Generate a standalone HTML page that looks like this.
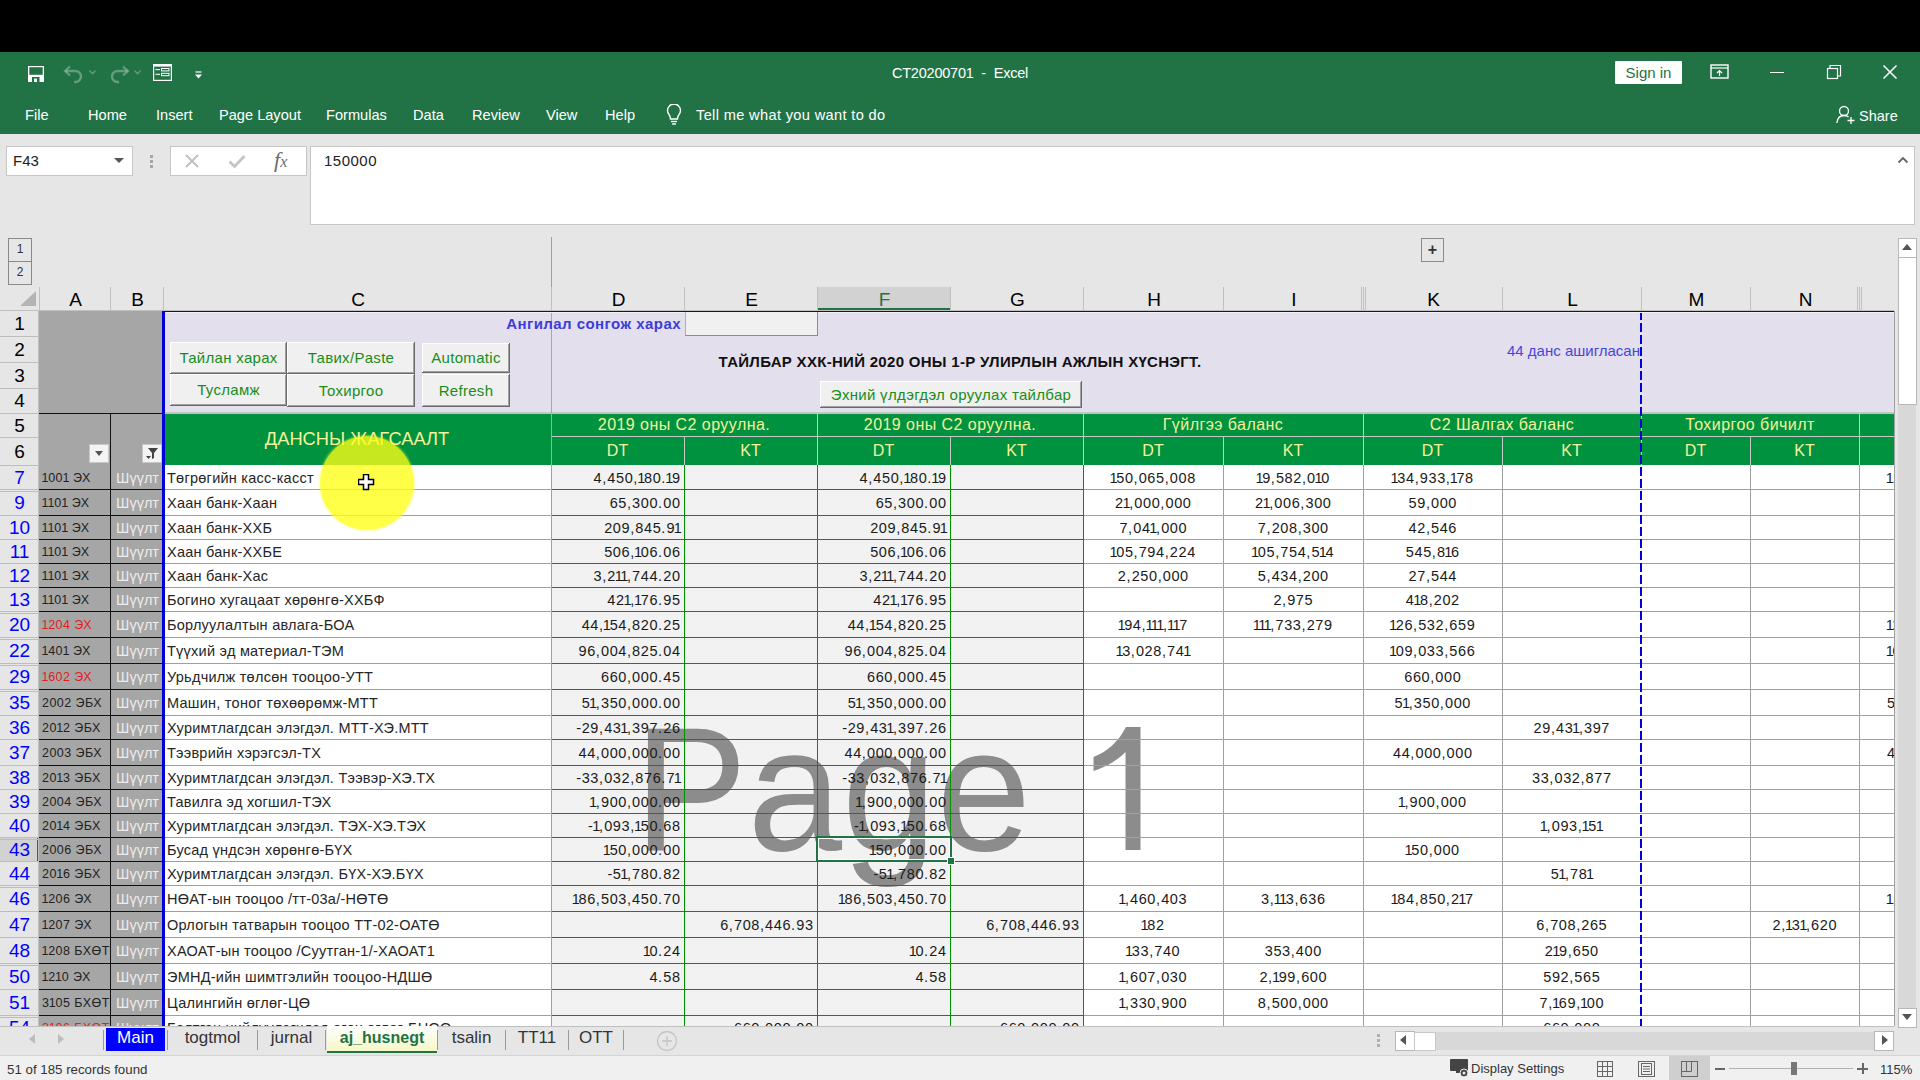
<!DOCTYPE html>
<html><head><meta charset="utf-8">
<style>
html,body{margin:0;padding:0;}
body{width:1920px;height:1080px;position:relative;overflow:hidden;background:#e6e6e6;font-family:"Liberation Sans",sans-serif;}
body>div,body>svg{position:absolute;}
div div{position:absolute;}
.t{white-space:nowrap;overflow:visible;}
</style></head><body>
<div style="left:0px;top:0px;width:1920px;height:52px;background:#000"></div>
<div style="left:0px;top:52px;width:1920px;height:82px;background:#217346"></div>
<svg style="left:28px;top:66px" width="16" height="16" viewBox="0 0 16 16">
<rect x="0" y="0" width="16" height="16" fill="#fff"/>
<rect x="1.3" y="1.2" width="13.4" height="7.6" fill="#217346"/>
<rect x="4" y="11" width="7.5" height="5" fill="#217346"/>
<rect x="6" y="12.6" width="3" height="3.4" fill="#fff"/>
</svg>
<svg style="left:63px;top:65px" width="22" height="19" viewBox="0 0 22 19">
<path d="M2.5 6 H12.5 A5.5 5.5 0 0 1 12.5 17 H11" fill="none" stroke="rgba(190,220,200,0.42)" stroke-width="2.4"/>
<path d="M7 1.5 L2 6 L7 10.5" fill="none" stroke="rgba(190,220,200,0.42)" stroke-width="2.2"/>
</svg>
<svg style="left:89px;top:70px" width="7" height="5" viewBox="0 0 7 5"><path d="M0.5 0.5 L3.5 3.8 L6.5 0.5" fill="none" stroke="rgba(190,220,200,0.42)" stroke-width="1.3"/></svg>
<svg style="left:108px;top:65px" width="22" height="19" viewBox="0 0 22 19">
<path d="M19.5 6 H9.5 A5.5 5.5 0 0 0 9.5 17 H11" fill="none" stroke="rgba(190,220,200,0.42)" stroke-width="2.4"/>
<path d="M15 1.5 L20 6 L15 10.5" fill="none" stroke="rgba(190,220,200,0.42)" stroke-width="2.2"/>
</svg>
<svg style="left:134px;top:70px" width="7" height="5" viewBox="0 0 7 5"><path d="M0.5 0.5 L3.5 3.8 L6.5 0.5" fill="none" stroke="rgba(190,220,200,0.42)" stroke-width="1.3"/></svg>
<svg style="left:153px;top:64px" width="19" height="17" viewBox="0 0 19 17">
<rect x="0.6" y="0.6" width="17.8" height="15.8" fill="none" stroke="#fff" stroke-width="1.2"/>
<rect x="0.6" y="0.6" width="17.8" height="2" fill="#fff"/>
<line x1="2.5" y1="5.6" x2="7" y2="5.6" stroke="#fff" stroke-width="1.1"/>
<rect x="8.5" y="4.5" width="7.5" height="2.4" fill="none" stroke="#fff" stroke-width="1"/>
<line x1="2.5" y1="10.3" x2="7" y2="10.3" stroke="#fff" stroke-width="1.1"/>
<rect x="8.5" y="9.3" width="7.5" height="2.4" fill="none" stroke="#fff" stroke-width="1"/>
</svg>
<svg style="left:195px;top:71px" width="7" height="8" viewBox="0 0 7 8">
<line x1="0.5" y1="1" x2="6.5" y2="1" stroke="#fff" stroke-width="1.2"/>
<path d="M0 3.5 H7 L3.5 7.5 Z" fill="#fff"/></svg>
<div class="t" style="left:700px;top:61px;width:520px;height:24px;line-height:24px;color:#fff;font-size:14.5px;text-align:center;letter-spacing:-0.2px">CT20200701&nbsp; -&nbsp; Excel</div>
<div style="left:1615px;top:61px;width:67px;height:23px;background:#fff;border-radius:1px"></div>
<div class="t" style="left:1615px;top:61px;width:67px;height:23px;line-height:23px;color:#217346;font-size:15px;text-align:center">Sign in</div>
<svg style="left:1710px;top:64px" width="20" height="16" viewBox="0 0 20 16">
<rect x="1" y="1" width="17" height="13" fill="none" stroke="#fff" stroke-width="1.4"/>
<line x1="1" y1="4" x2="18" y2="4" stroke="#fff" stroke-width="1.2"/>
<path d="M9.5 12 V6.5 M7 9 L9.5 6.5 L12 9" fill="none" stroke="#fff" stroke-width="1.2"/>
</svg>
<div style="left:1770px;top:72px;width:14px;height:1px;background:#fff"></div>
<svg style="left:1826px;top:64px" width="16" height="16" viewBox="0 0 16 16">
<rect x="1.5" y="4.5" width="10" height="10" fill="none" stroke="#fff" stroke-width="1.2"/>
<path d="M4 4.5 V1.5 H14.5 V12 H11.5" fill="none" stroke="#fff" stroke-width="1.2"/>
</svg>
<svg style="left:1882px;top:64px" width="16" height="16" viewBox="0 0 16 16">
<path d="M1.5 1.5 L14.5 14.5 M14.5 1.5 L1.5 14.5" stroke="#fff" stroke-width="1.5"/>
</svg>
<div class="t" style="left:25px;top:103px;width:200px;height:24px;line-height:24px;color:#fff;font-size:14.6px">File</div>
<div class="t" style="left:88px;top:103px;width:200px;height:24px;line-height:24px;color:#fff;font-size:14.6px">Home</div>
<div class="t" style="left:156px;top:103px;width:200px;height:24px;line-height:24px;color:#fff;font-size:14.6px">Insert</div>
<div class="t" style="left:219px;top:103px;width:200px;height:24px;line-height:24px;color:#fff;font-size:14.6px">Page Layout</div>
<div class="t" style="left:326px;top:103px;width:200px;height:24px;line-height:24px;color:#fff;font-size:14.6px">Formulas</div>
<div class="t" style="left:413px;top:103px;width:200px;height:24px;line-height:24px;color:#fff;font-size:14.6px">Data</div>
<div class="t" style="left:472px;top:103px;width:200px;height:24px;line-height:24px;color:#fff;font-size:14.6px">Review</div>
<div class="t" style="left:546px;top:103px;width:200px;height:24px;line-height:24px;color:#fff;font-size:14.6px">View</div>
<div class="t" style="left:605px;top:103px;width:200px;height:24px;line-height:24px;color:#fff;font-size:14.6px">Help</div>
<svg style="left:666px;top:104px" width="16" height="22" viewBox="0 0 16 22">
<path d="M4.5 15 C4.5 11 1.5 10 1.5 6.5 A6.5 6.5 0 0 1 14.5 6.5 C14.5 10 11.5 11 11.5 15 Z" fill="none" stroke="#fff" stroke-width="1.4"/>
<line x1="5" y1="17.5" x2="11" y2="17.5" stroke="#fff" stroke-width="1.4"/>
<line x1="6" y1="20" x2="10" y2="20" stroke="#fff" stroke-width="1.4"/>
</svg>
<div class="t" style="left:696px;top:103px;width:260px;height:24px;line-height:24px;color:#fff;font-size:14.6px;letter-spacing:0.35px">Tell me what you want to do</div>
<svg style="left:1836px;top:105px" width="20" height="20" viewBox="0 0 20 20">
<circle cx="8" cy="6" r="4.5" fill="none" stroke="#fff" stroke-width="1.3"/>
<path d="M0.8 18 C1.5 12 4 10.5 8 10.5 C10 10.5 11.5 11 12.5 12" fill="none" stroke="#fff" stroke-width="1.3"/>
<path d="M15 12 V19 M11.5 15.5 H18.5" stroke="#fff" stroke-width="1.3"/>
</svg>
<div class="t" style="left:1859px;top:104px;width:60px;height:24px;line-height:24px;color:#fff;font-size:14.5px">Share</div>
<div style="left:0px;top:134px;width:1920px;height:153px;background:#e6e6e6"></div>
<div style="left:6px;top:146px;width:125px;height:28px;background:#fff;border:1px solid #c6c6c6"></div>
<div class="t" style="left:13px;top:147px;width:60px;height:28px;line-height:28px;color:#222;font-size:15px">F43</div>
<svg style="left:114px;top:158px" width="10" height="6" viewBox="0 0 10 6"><path d="M0 0 H10 L5 5 Z" fill="#555"/></svg>
<div style="left:150px;top:155px;width:3px;height:3px;background:#a6a6a6"></div>
<div style="left:150px;top:160px;width:3px;height:3px;background:#a6a6a6"></div>
<div style="left:150px;top:165px;width:3px;height:3px;background:#a6a6a6"></div>
<div style="left:170px;top:146px;width:135px;height:28px;background:#fff;border:1px solid #c6c6c6"></div>
<svg style="left:184px;top:153px" width="16" height="16" viewBox="0 0 16 16">
<path d="M2 2 L14 14 M14 2 L2 14" stroke="#c0c0c0" stroke-width="2"/></svg>
<svg style="left:228px;top:153px" width="18" height="16" viewBox="0 0 18 16">
<path d="M1.5 8.5 L6.5 13.5 L16.5 3" fill="none" stroke="#c4c4c4" stroke-width="2.8"/></svg>
<div class="t" style="left:274px;top:146px;width:30px;height:28px;line-height:28px;color:#6a6a6a;font-size:22px;font-family:'Liberation Serif',serif"><i>f</i><span style="font-size:16px;font-style:italic">x</span></div>
<div style="left:310px;top:146px;width:1603px;height:77px;background:#fff;border:1px solid #c6c6c6"></div>
<div class="t" style="left:324px;top:147px;width:200px;height:28px;line-height:28px;color:#222;font-size:15px;letter-spacing:0.5px">150000</div>
<svg style="left:1897px;top:156px" width="12" height="8" viewBox="0 0 12 8"><path d="M1.5 6.5 L6 2 L10.5 6.5" fill="none" stroke="#666" stroke-width="1.8"/></svg>
<div style="left:8px;top:238px;width:22px;height:22px;background:#e6e6e6;border:1px solid #8a8a8a"></div>
<div class="t" style="left:8px;top:238px;width:24px;height:23px;line-height:23px;color:#333;font-size:12px;text-align:center">1</div>
<div style="left:8px;top:261px;width:22px;height:22px;background:#e6e6e6;border:1px solid #8a8a8a"></div>
<div class="t" style="left:8px;top:261px;width:24px;height:23px;line-height:23px;color:#333;font-size:12px;text-align:center">2</div>
<div style="left:1421px;top:238px;width:21px;height:22px;background:#e6e6e6;border:1px solid #8a8a8a"></div>
<div class="t" style="left:1421px;top:238px;width:23px;height:23px;line-height:23px;color:#333;font-size:16px;text-align:center;font-weight:bold">+</div>
<div style="left:551px;top:237px;width:1px;height:50px;background:#a0a0a0"></div>
<div style="left:0px;top:287px;width:1894px;height:24px;background:#e6e6e6"></div>
<div style="left:817px;top:287px;width:133px;height:24px;background:#d2d2d2"></div>
<div style="left:817px;top:308px;width:133px;height:2px;background:#217346"></div>
<div class="t" style="left:40px;top:287px;width:71px;height:25px;line-height:25px;color:#000;font-size:19px;text-align:center">A</div>
<div class="t" style="left:111px;top:287px;width:53px;height:25px;line-height:25px;color:#000;font-size:19px;text-align:center">B</div>
<div class="t" style="left:164px;top:287px;width:388px;height:25px;line-height:25px;color:#000;font-size:19px;text-align:center">C</div>
<div class="t" style="left:552px;top:287px;width:133px;height:25px;line-height:25px;color:#000;font-size:19px;text-align:center">D</div>
<div class="t" style="left:685px;top:287px;width:133px;height:25px;line-height:25px;color:#000;font-size:19px;text-align:center">E</div>
<div class="t" style="left:818px;top:287px;width:133px;height:25px;line-height:25px;color:#217346;font-size:19px;text-align:center">F</div>
<div class="t" style="left:951px;top:287px;width:133px;height:25px;line-height:25px;color:#000;font-size:19px;text-align:center">G</div>
<div class="t" style="left:1084px;top:287px;width:140px;height:25px;line-height:25px;color:#000;font-size:19px;text-align:center">H</div>
<div class="t" style="left:1224px;top:287px;width:140px;height:25px;line-height:25px;color:#000;font-size:19px;text-align:center">I</div>
<div class="t" style="left:1364px;top:287px;width:139px;height:25px;line-height:25px;color:#000;font-size:19px;text-align:center">K</div>
<div class="t" style="left:1503px;top:287px;width:139px;height:25px;line-height:25px;color:#000;font-size:19px;text-align:center">L</div>
<div class="t" style="left:1642px;top:287px;width:109px;height:25px;line-height:25px;color:#000;font-size:19px;text-align:center">M</div>
<div class="t" style="left:1751px;top:287px;width:109px;height:25px;line-height:25px;color:#000;font-size:19px;text-align:center">N</div>
<div style="left:39px;top:287px;width:1px;height:24px;background:#c0c0c0"></div>
<div style="left:110px;top:287px;width:1px;height:24px;background:#c0c0c0"></div>
<div style="left:163px;top:287px;width:1px;height:24px;background:#c0c0c0"></div>
<div style="left:551px;top:287px;width:1px;height:24px;background:#c0c0c0"></div>
<div style="left:684px;top:287px;width:1px;height:24px;background:#c0c0c0"></div>
<div style="left:817px;top:287px;width:1px;height:24px;background:#c0c0c0"></div>
<div style="left:950px;top:287px;width:1px;height:24px;background:#c0c0c0"></div>
<div style="left:1083px;top:287px;width:1px;height:24px;background:#c0c0c0"></div>
<div style="left:1223px;top:287px;width:1px;height:24px;background:#c0c0c0"></div>
<div style="left:1363px;top:287px;width:1px;height:24px;background:#c0c0c0"></div>
<div style="left:1502px;top:287px;width:1px;height:24px;background:#c0c0c0"></div>
<div style="left:1641px;top:287px;width:1px;height:24px;background:#c0c0c0"></div>
<div style="left:1750px;top:287px;width:1px;height:24px;background:#c0c0c0"></div>
<div style="left:1859px;top:287px;width:1px;height:24px;background:#c0c0c0"></div>
<div style="left:1361px;top:287px;width:1px;height:24px;background:#c0c0c0"></div>
<div style="left:1365px;top:287px;width:1px;height:24px;background:#c0c0c0"></div>
<div style="left:1857px;top:287px;width:1px;height:24px;background:#c0c0c0"></div>
<div style="left:1861px;top:287px;width:1px;height:24px;background:#c0c0c0"></div>
<div style="left:0px;top:310px;width:39px;height:1px;background:#c0c0c0"></div>
<svg style="left:20px;top:291px" width="17" height="16" viewBox="0 0 17 16"><path d="M16 0 V15 H0 Z" fill="#b4b4b4"/></svg>
<div style="left:0px;top:311px;width:39px;height:715px;background:#e6e6e6"></div>
<div class="t" style="left:0px;top:311px;width:39px;height:26px;line-height:26px;color:#000;font-size:19px;text-align:center">1</div>
<div class="t" style="left:0px;top:336px;width:39px;height:27px;line-height:27px;color:#000;font-size:19px;text-align:center">2</div>
<div class="t" style="left:0px;top:362px;width:39px;height:27px;line-height:27px;color:#000;font-size:19px;text-align:center">3</div>
<div class="t" style="left:0px;top:388px;width:39px;height:26px;line-height:26px;color:#000;font-size:19px;text-align:center">4</div>
<div class="t" style="left:0px;top:413px;width:39px;height:25px;line-height:25px;color:#000;font-size:19px;text-align:center">5</div>
<div class="t" style="left:0px;top:437px;width:39px;height:29px;line-height:29px;color:#000;font-size:19px;text-align:center">6</div>
<div class="t" style="left:0px;top:465px;width:39px;height:25px;line-height:25px;color:#0000ff;font-size:19px;text-align:center">7</div>
<div class="t" style="left:0px;top:490px;width:39px;height:26px;line-height:26px;color:#0000ff;font-size:19px;text-align:center">9</div>
<div class="t" style="left:0px;top:515px;width:39px;height:25px;line-height:25px;color:#0000ff;font-size:19px;text-align:center">10</div>
<div class="t" style="left:0px;top:539px;width:39px;height:25px;line-height:25px;color:#0000ff;font-size:19px;text-align:center">11</div>
<div class="t" style="left:0px;top:563px;width:39px;height:25px;line-height:25px;color:#0000ff;font-size:19px;text-align:center">12</div>
<div class="t" style="left:0px;top:587px;width:39px;height:25px;line-height:25px;color:#0000ff;font-size:19px;text-align:center">13</div>
<div class="t" style="left:0px;top:612px;width:39px;height:26px;line-height:26px;color:#0000ff;font-size:19px;text-align:center">20</div>
<div class="t" style="left:0px;top:638px;width:39px;height:26px;line-height:26px;color:#0000ff;font-size:19px;text-align:center">22</div>
<div class="t" style="left:0px;top:664px;width:39px;height:26px;line-height:26px;color:#0000ff;font-size:19px;text-align:center">29</div>
<div class="t" style="left:0px;top:690px;width:39px;height:26px;line-height:26px;color:#0000ff;font-size:19px;text-align:center">35</div>
<div class="t" style="left:0px;top:715px;width:39px;height:25px;line-height:25px;color:#0000ff;font-size:19px;text-align:center">36</div>
<div class="t" style="left:0px;top:739px;width:39px;height:27px;line-height:27px;color:#0000ff;font-size:19px;text-align:center">37</div>
<div class="t" style="left:0px;top:765px;width:39px;height:25px;line-height:25px;color:#0000ff;font-size:19px;text-align:center">38</div>
<div class="t" style="left:0px;top:789px;width:39px;height:25px;line-height:25px;color:#0000ff;font-size:19px;text-align:center">39</div>
<div class="t" style="left:0px;top:813px;width:39px;height:25px;line-height:25px;color:#0000ff;font-size:19px;text-align:center">40</div>
<div style="left:0px;top:838px;width:39px;height:23px;background:#d2d2d2"></div>
<div style="left:37px;top:838px;width:2px;height:23px;background:#217346"></div>
<div class="t" style="left:0px;top:838px;width:39px;height:24px;line-height:24px;color:#0000ff;font-size:19px;text-align:center">43</div>
<div class="t" style="left:0px;top:861px;width:39px;height:25px;line-height:25px;color:#0000ff;font-size:19px;text-align:center">44</div>
<div class="t" style="left:0px;top:886px;width:39px;height:26px;line-height:26px;color:#0000ff;font-size:19px;text-align:center">46</div>
<div class="t" style="left:0px;top:911px;width:39px;height:27px;line-height:27px;color:#0000ff;font-size:19px;text-align:center">47</div>
<div class="t" style="left:0px;top:937px;width:39px;height:27px;line-height:27px;color:#0000ff;font-size:19px;text-align:center">48</div>
<div class="t" style="left:0px;top:964px;width:39px;height:26px;line-height:26px;color:#0000ff;font-size:19px;text-align:center">50</div>
<div class="t" style="left:0px;top:989px;width:39px;height:27px;line-height:27px;color:#0000ff;font-size:19px;text-align:center">51</div>
<div class="t" style="left:0px;top:1015px;width:39px;height:26px;line-height:26px;color:#0000ff;font-size:19px;text-align:center">54</div>
<div style="left:0px;top:336px;width:39px;height:1px;background:#bdbdbd"></div>
<div style="left:0px;top:362px;width:39px;height:1px;background:#bdbdbd"></div>
<div style="left:0px;top:388px;width:39px;height:1px;background:#bdbdbd"></div>
<div style="left:0px;top:413px;width:39px;height:1px;background:#bdbdbd"></div>
<div style="left:0px;top:437px;width:39px;height:1px;background:#bdbdbd"></div>
<div style="left:0px;top:465px;width:39px;height:1px;background:#bdbdbd"></div>
<div style="left:0px;top:489px;width:39px;height:1px;background:#bdbdbd"></div>
<div style="left:0px;top:491px;width:39px;height:1px;background:#bdbdbd"></div>
<div style="left:0px;top:515px;width:39px;height:1px;background:#bdbdbd"></div>
<div style="left:0px;top:539px;width:39px;height:1px;background:#bdbdbd"></div>
<div style="left:0px;top:563px;width:39px;height:1px;background:#bdbdbd"></div>
<div style="left:0px;top:587px;width:39px;height:1px;background:#bdbdbd"></div>
<div style="left:0px;top:611px;width:39px;height:1px;background:#bdbdbd"></div>
<div style="left:0px;top:613px;width:39px;height:1px;background:#bdbdbd"></div>
<div style="left:0px;top:637px;width:39px;height:1px;background:#bdbdbd"></div>
<div style="left:0px;top:639px;width:39px;height:1px;background:#bdbdbd"></div>
<div style="left:0px;top:663px;width:39px;height:1px;background:#bdbdbd"></div>
<div style="left:0px;top:665px;width:39px;height:1px;background:#bdbdbd"></div>
<div style="left:0px;top:689px;width:39px;height:1px;background:#bdbdbd"></div>
<div style="left:0px;top:691px;width:39px;height:1px;background:#bdbdbd"></div>
<div style="left:0px;top:715px;width:39px;height:1px;background:#bdbdbd"></div>
<div style="left:0px;top:739px;width:39px;height:1px;background:#bdbdbd"></div>
<div style="left:0px;top:765px;width:39px;height:1px;background:#bdbdbd"></div>
<div style="left:0px;top:789px;width:39px;height:1px;background:#bdbdbd"></div>
<div style="left:0px;top:813px;width:39px;height:1px;background:#bdbdbd"></div>
<div style="left:0px;top:837px;width:39px;height:1px;background:#bdbdbd"></div>
<div style="left:0px;top:839px;width:39px;height:1px;background:#bdbdbd"></div>
<div style="left:0px;top:861px;width:39px;height:1px;background:#bdbdbd"></div>
<div style="left:0px;top:885px;width:39px;height:1px;background:#bdbdbd"></div>
<div style="left:0px;top:887px;width:39px;height:1px;background:#bdbdbd"></div>
<div style="left:0px;top:911px;width:39px;height:1px;background:#bdbdbd"></div>
<div style="left:0px;top:937px;width:39px;height:1px;background:#bdbdbd"></div>
<div style="left:0px;top:963px;width:39px;height:1px;background:#bdbdbd"></div>
<div style="left:0px;top:965px;width:39px;height:1px;background:#bdbdbd"></div>
<div style="left:0px;top:989px;width:39px;height:1px;background:#bdbdbd"></div>
<div style="left:0px;top:1015px;width:39px;height:1px;background:#bdbdbd"></div>
<div style="left:0px;top:1017px;width:39px;height:1px;background:#bdbdbd"></div>
<div style="left:38px;top:311px;width:1px;height:715px;background:#c0c0c0"></div>
<div style="left:39px;top:311px;width:124px;height:154px;background:#a6a6a6"></div>
<div style="left:39px;top:413px;width:124px;height:1px;background:#111"></div>
<div style="left:110px;top:413px;width:1px;height:52px;background:#111"></div>
<div style="left:163px;top:311px;width:1731px;height:102px;background:#e4dfec"></div>
<div style="left:163px;top:414px;width:1731px;height:51px;background:#00923f"></div>
<div style="left:551px;top:436px;width:1343px;height:1px;background:#c8c8c8"></div>
<div style="left:817px;top:413px;width:1px;height:52px;background:#c8c8c8"></div>
<div style="left:1083px;top:413px;width:1px;height:52px;background:#c8c8c8"></div>
<div style="left:1363px;top:413px;width:1px;height:52px;background:#c8c8c8"></div>
<div style="left:1641px;top:413px;width:1px;height:52px;background:#c8c8c8"></div>
<div style="left:1859px;top:413px;width:1px;height:52px;background:#c8c8c8"></div>
<div style="left:684px;top:437px;width:1px;height:28px;background:#c8c8c8"></div>
<div style="left:950px;top:437px;width:1px;height:28px;background:#c8c8c8"></div>
<div style="left:1223px;top:437px;width:1px;height:28px;background:#c8c8c8"></div>
<div style="left:1502px;top:437px;width:1px;height:28px;background:#c8c8c8"></div>
<div style="left:1750px;top:437px;width:1px;height:28px;background:#c8c8c8"></div>
<div style="left:163px;top:412px;width:1731px;height:2px;background:#c4c4c4"></div>
<div class="t" style="left:163px;top:413px;width:388px;height:52px;line-height:52px;color:#f4f49a;font-size:18.3px;text-align:center">ДАНСНЫ ЖАГСААЛТ</div>
<div class="t" style="left:551px;top:413px;width:266px;height:24px;line-height:24px;color:#f4f49a;font-size:16px;text-align:center;letter-spacing:0.45px">2019 оны С2 оруулна.</div>
<div class="t" style="left:817px;top:413px;width:266px;height:24px;line-height:24px;color:#f4f49a;font-size:16px;text-align:center;letter-spacing:0.45px">2019 оны С2 оруулна.</div>
<div class="t" style="left:1083px;top:413px;width:280px;height:24px;line-height:24px;color:#f4f49a;font-size:16px;text-align:center;letter-spacing:0.45px">Гүйлгээ баланс</div>
<div class="t" style="left:1363px;top:413px;width:278px;height:24px;line-height:24px;color:#f4f49a;font-size:16px;text-align:center;letter-spacing:0.45px">С2 Шалгах баланс</div>
<div class="t" style="left:1641px;top:413px;width:218px;height:24px;line-height:24px;color:#f4f49a;font-size:16px;text-align:center;letter-spacing:0.45px">Тохиргоо бичилт</div>
<div class="t" style="left:551px;top:437px;width:133px;height:28px;line-height:28px;color:#f4f49a;font-size:16px;text-align:center">DT</div>
<div class="t" style="left:684px;top:437px;width:133px;height:28px;line-height:28px;color:#f4f49a;font-size:16px;text-align:center">KT</div>
<div class="t" style="left:817px;top:437px;width:133px;height:28px;line-height:28px;color:#f4f49a;font-size:16px;text-align:center">DT</div>
<div class="t" style="left:950px;top:437px;width:133px;height:28px;line-height:28px;color:#f4f49a;font-size:16px;text-align:center">KT</div>
<div class="t" style="left:1083px;top:437px;width:140px;height:28px;line-height:28px;color:#f4f49a;font-size:16px;text-align:center">DT</div>
<div class="t" style="left:1223px;top:437px;width:140px;height:28px;line-height:28px;color:#f4f49a;font-size:16px;text-align:center">KT</div>
<div class="t" style="left:1363px;top:437px;width:139px;height:28px;line-height:28px;color:#f4f49a;font-size:16px;text-align:center">DT</div>
<div class="t" style="left:1502px;top:437px;width:139px;height:28px;line-height:28px;color:#f4f49a;font-size:16px;text-align:center">KT</div>
<div class="t" style="left:1641px;top:437px;width:109px;height:28px;line-height:28px;color:#f4f49a;font-size:16px;text-align:center">DT</div>
<div class="t" style="left:1750px;top:437px;width:109px;height:28px;line-height:28px;color:#f4f49a;font-size:16px;text-align:center">KT</div>
<div style="left:39px;top:465px;width:124px;height:561px;background:#a6a6a6"></div>
<div style="left:163px;top:465px;width:388px;height:561px;background:#fff"></div>
<div style="left:551px;top:465px;width:532px;height:561px;background:#f2f2f2"></div>
<div style="left:1083px;top:465px;width:811px;height:561px;background:#fff"></div>
<div class="t" style="left:634px;top:691px;width:700px;height:200px;line-height:200px;font-size:170px;color:#8c8c8c;white-space:nowrap;transform:scaleY(1.036);transform-origin:0 158.7px">Page</div>
<svg style="left:1093px;top:727px" width="48" height="124" viewBox="0 0 48 124"><path d="M33 0 H47.5 V123 H32.5 V25 C25 33 13 40 0.5 44 V30 C14 25 26 14 33 0 Z" fill="#8c8c8c"/></svg>
<div class="t" style="left:42px;top:466px;width:68px;height:24px;line-height:24px;font-size:12.5px;color:#222;white-space:nowrap;overflow:hidden;letter-spacing:0.45px"><span style="margin-left:-0.6px;letter-spacing:-0.2px">1</span>00<span style="margin-left:-0.6px;letter-spacing:-0.2px">1</span> ЭХ</div>
<div class="t" style="left:111px;top:466px;width:48px;height:24px;line-height:24px;font-size:14.5px;color:#ececec;text-align:right;overflow:hidden;white-space:nowrap">Шүүлт</div>
<div class="t" style="left:167px;top:466px;width:380px;height:24px;line-height:24px;font-size:14.5px;color:#1a1a1a;white-space:nowrap;letter-spacing:0.25px;color:#262626">Төгрөгийн касс-касст</div>
<div class="t" style="left:551px;top:466px;width:129.6px;height:24px;line-height:24px;font-size:14.5px;color:#1a1a1a;letter-spacing:0.6px;text-align:right">4<span style="letter-spacing:1.1px">,</span>450<span style="letter-spacing:1.1px">,</span><span style="margin-left:-1.3px;letter-spacing:-1.3px">1</span>80<span style="letter-spacing:1.1px">.</span><span style="margin-left:-1.3px;letter-spacing:-1.3px">1</span>9</div>
<div class="t" style="left:817px;top:466px;width:129.6px;height:24px;line-height:24px;font-size:14.5px;color:#1a1a1a;letter-spacing:0.6px;text-align:right">4<span style="letter-spacing:1.1px">,</span>450<span style="letter-spacing:1.1px">,</span><span style="margin-left:-1.3px;letter-spacing:-1.3px">1</span>80<span style="letter-spacing:1.1px">.</span><span style="margin-left:-1.3px;letter-spacing:-1.3px">1</span>9</div>
<div class="t" style="left:1083px;top:466px;width:140.6px;height:24px;line-height:24px;font-size:14.5px;color:#1a1a1a;letter-spacing:0.6px;text-align:center"><span style="margin-left:-1.3px;letter-spacing:-1.3px">1</span>50<span style="letter-spacing:1.1px">,</span>065<span style="letter-spacing:1.1px">,</span>008</div>
<div class="t" style="left:1223px;top:466px;width:140.6px;height:24px;line-height:24px;font-size:14.5px;color:#1a1a1a;letter-spacing:0.6px;text-align:center"><span style="margin-left:-1.3px;letter-spacing:-1.3px">1</span>9<span style="letter-spacing:1.1px">,</span>582<span style="letter-spacing:1.1px">,</span>0<span style="margin-left:-1.3px;letter-spacing:-1.3px">1</span>0</div>
<div class="t" style="left:1363px;top:466px;width:139.6px;height:24px;line-height:24px;font-size:14.5px;color:#1a1a1a;letter-spacing:0.6px;text-align:center"><span style="margin-left:-1.3px;letter-spacing:-1.3px">1</span>34<span style="letter-spacing:1.1px">,</span>933<span style="letter-spacing:1.1px">,</span><span style="margin-left:-1.3px;letter-spacing:-1.3px">1</span>78</div>
<div style="left:1860px;top:466px;width:34px;height:24px;overflow:hidden"><div class="t" style="left:27px;top:0;width:72px;height:24px;line-height:24px;font-size:14.5px;color:#1a1a1a;letter-spacing:0.6px;text-align:left"><span style="margin-left:-1.3px;letter-spacing:-1.3px">1</span>,000</div></div>
<div class="t" style="left:42px;top:491px;width:68px;height:25px;line-height:25px;font-size:12.5px;color:#222;white-space:nowrap;overflow:hidden;letter-spacing:0.45px"><span style="margin-left:-0.6px;letter-spacing:-0.2px">1</span><span style="margin-left:-0.6px;letter-spacing:-0.2px">1</span>0<span style="margin-left:-0.6px;letter-spacing:-0.2px">1</span> ЭХ</div>
<div class="t" style="left:111px;top:491px;width:48px;height:25px;line-height:25px;font-size:14.5px;color:#ececec;text-align:right;overflow:hidden;white-space:nowrap">Шүүлт</div>
<div class="t" style="left:167px;top:491px;width:380px;height:25px;line-height:25px;font-size:14.5px;color:#1a1a1a;white-space:nowrap;letter-spacing:0.25px;color:#262626">Хаан банк-Хаан</div>
<div class="t" style="left:551px;top:491px;width:129.6px;height:25px;line-height:25px;font-size:14.5px;color:#1a1a1a;letter-spacing:0.6px;text-align:right">65<span style="letter-spacing:1.1px">,</span>300<span style="letter-spacing:1.1px">.</span>00</div>
<div class="t" style="left:817px;top:491px;width:129.6px;height:25px;line-height:25px;font-size:14.5px;color:#1a1a1a;letter-spacing:0.6px;text-align:right">65<span style="letter-spacing:1.1px">,</span>300<span style="letter-spacing:1.1px">.</span>00</div>
<div class="t" style="left:1083px;top:491px;width:140.6px;height:25px;line-height:25px;font-size:14.5px;color:#1a1a1a;letter-spacing:0.6px;text-align:center">2<span style="margin-left:-1.3px;letter-spacing:-1.3px">1</span><span style="letter-spacing:1.1px">,</span>000<span style="letter-spacing:1.1px">,</span>000</div>
<div class="t" style="left:1223px;top:491px;width:140.6px;height:25px;line-height:25px;font-size:14.5px;color:#1a1a1a;letter-spacing:0.6px;text-align:center">2<span style="margin-left:-1.3px;letter-spacing:-1.3px">1</span><span style="letter-spacing:1.1px">,</span>006<span style="letter-spacing:1.1px">,</span>300</div>
<div class="t" style="left:1363px;top:491px;width:139.6px;height:25px;line-height:25px;font-size:14.5px;color:#1a1a1a;letter-spacing:0.6px;text-align:center">59<span style="letter-spacing:1.1px">,</span>000</div>
<div class="t" style="left:42px;top:516px;width:68px;height:24px;line-height:24px;font-size:12.5px;color:#222;white-space:nowrap;overflow:hidden;letter-spacing:0.45px"><span style="margin-left:-0.6px;letter-spacing:-0.2px">1</span><span style="margin-left:-0.6px;letter-spacing:-0.2px">1</span>0<span style="margin-left:-0.6px;letter-spacing:-0.2px">1</span> ЭХ</div>
<div class="t" style="left:111px;top:516px;width:48px;height:24px;line-height:24px;font-size:14.5px;color:#ececec;text-align:right;overflow:hidden;white-space:nowrap">Шүүлт</div>
<div class="t" style="left:167px;top:516px;width:380px;height:24px;line-height:24px;font-size:14.5px;color:#1a1a1a;white-space:nowrap;letter-spacing:0.25px;color:#262626">Хаан банк-ХХБ</div>
<div class="t" style="left:551px;top:516px;width:129.6px;height:24px;line-height:24px;font-size:14.5px;color:#1a1a1a;letter-spacing:0.6px;text-align:right">209<span style="letter-spacing:1.1px">,</span>845<span style="letter-spacing:1.1px">.</span>9<span style="margin-left:-1.3px;letter-spacing:-1.3px">1</span></div>
<div class="t" style="left:817px;top:516px;width:129.6px;height:24px;line-height:24px;font-size:14.5px;color:#1a1a1a;letter-spacing:0.6px;text-align:right">209<span style="letter-spacing:1.1px">,</span>845<span style="letter-spacing:1.1px">.</span>9<span style="margin-left:-1.3px;letter-spacing:-1.3px">1</span></div>
<div class="t" style="left:1083px;top:516px;width:140.6px;height:24px;line-height:24px;font-size:14.5px;color:#1a1a1a;letter-spacing:0.6px;text-align:center">7<span style="letter-spacing:1.1px">,</span>04<span style="margin-left:-1.3px;letter-spacing:-1.3px">1</span><span style="letter-spacing:1.1px">,</span>000</div>
<div class="t" style="left:1223px;top:516px;width:140.6px;height:24px;line-height:24px;font-size:14.5px;color:#1a1a1a;letter-spacing:0.6px;text-align:center">7<span style="letter-spacing:1.1px">,</span>208<span style="letter-spacing:1.1px">,</span>300</div>
<div class="t" style="left:1363px;top:516px;width:139.6px;height:24px;line-height:24px;font-size:14.5px;color:#1a1a1a;letter-spacing:0.6px;text-align:center">42<span style="letter-spacing:1.1px">,</span>546</div>
<div class="t" style="left:42px;top:540px;width:68px;height:24px;line-height:24px;font-size:12.5px;color:#222;white-space:nowrap;overflow:hidden;letter-spacing:0.45px"><span style="margin-left:-0.6px;letter-spacing:-0.2px">1</span><span style="margin-left:-0.6px;letter-spacing:-0.2px">1</span>0<span style="margin-left:-0.6px;letter-spacing:-0.2px">1</span> ЭХ</div>
<div class="t" style="left:111px;top:540px;width:48px;height:24px;line-height:24px;font-size:14.5px;color:#ececec;text-align:right;overflow:hidden;white-space:nowrap">Шүүлт</div>
<div class="t" style="left:167px;top:540px;width:380px;height:24px;line-height:24px;font-size:14.5px;color:#1a1a1a;white-space:nowrap;letter-spacing:0.25px;color:#262626">Хаан банк-ХХБЕ</div>
<div class="t" style="left:551px;top:540px;width:129.6px;height:24px;line-height:24px;font-size:14.5px;color:#1a1a1a;letter-spacing:0.6px;text-align:right">506<span style="letter-spacing:1.1px">,</span><span style="margin-left:-1.3px;letter-spacing:-1.3px">1</span>06<span style="letter-spacing:1.1px">.</span>06</div>
<div class="t" style="left:817px;top:540px;width:129.6px;height:24px;line-height:24px;font-size:14.5px;color:#1a1a1a;letter-spacing:0.6px;text-align:right">506<span style="letter-spacing:1.1px">,</span><span style="margin-left:-1.3px;letter-spacing:-1.3px">1</span>06<span style="letter-spacing:1.1px">.</span>06</div>
<div class="t" style="left:1083px;top:540px;width:140.6px;height:24px;line-height:24px;font-size:14.5px;color:#1a1a1a;letter-spacing:0.6px;text-align:center"><span style="margin-left:-1.3px;letter-spacing:-1.3px">1</span>05<span style="letter-spacing:1.1px">,</span>794<span style="letter-spacing:1.1px">,</span>224</div>
<div class="t" style="left:1223px;top:540px;width:140.6px;height:24px;line-height:24px;font-size:14.5px;color:#1a1a1a;letter-spacing:0.6px;text-align:center"><span style="margin-left:-1.3px;letter-spacing:-1.3px">1</span>05<span style="letter-spacing:1.1px">,</span>754<span style="letter-spacing:1.1px">,</span>5<span style="margin-left:-1.3px;letter-spacing:-1.3px">1</span>4</div>
<div class="t" style="left:1363px;top:540px;width:139.6px;height:24px;line-height:24px;font-size:14.5px;color:#1a1a1a;letter-spacing:0.6px;text-align:center">545<span style="letter-spacing:1.1px">,</span>8<span style="margin-left:-1.3px;letter-spacing:-1.3px">1</span>6</div>
<div class="t" style="left:42px;top:564px;width:68px;height:24px;line-height:24px;font-size:12.5px;color:#222;white-space:nowrap;overflow:hidden;letter-spacing:0.45px"><span style="margin-left:-0.6px;letter-spacing:-0.2px">1</span><span style="margin-left:-0.6px;letter-spacing:-0.2px">1</span>0<span style="margin-left:-0.6px;letter-spacing:-0.2px">1</span> ЭХ</div>
<div class="t" style="left:111px;top:564px;width:48px;height:24px;line-height:24px;font-size:14.5px;color:#ececec;text-align:right;overflow:hidden;white-space:nowrap">Шүүлт</div>
<div class="t" style="left:167px;top:564px;width:380px;height:24px;line-height:24px;font-size:14.5px;color:#1a1a1a;white-space:nowrap;letter-spacing:0.25px;color:#262626">Хаан банк-Хас</div>
<div class="t" style="left:551px;top:564px;width:129.6px;height:24px;line-height:24px;font-size:14.5px;color:#1a1a1a;letter-spacing:0.6px;text-align:right">3<span style="letter-spacing:1.1px">,</span>2<span style="margin-left:-1.3px;letter-spacing:-1.3px">1</span><span style="margin-left:-1.3px;letter-spacing:-1.3px">1</span><span style="letter-spacing:1.1px">,</span>744<span style="letter-spacing:1.1px">.</span>20</div>
<div class="t" style="left:817px;top:564px;width:129.6px;height:24px;line-height:24px;font-size:14.5px;color:#1a1a1a;letter-spacing:0.6px;text-align:right">3<span style="letter-spacing:1.1px">,</span>2<span style="margin-left:-1.3px;letter-spacing:-1.3px">1</span><span style="margin-left:-1.3px;letter-spacing:-1.3px">1</span><span style="letter-spacing:1.1px">,</span>744<span style="letter-spacing:1.1px">.</span>20</div>
<div class="t" style="left:1083px;top:564px;width:140.6px;height:24px;line-height:24px;font-size:14.5px;color:#1a1a1a;letter-spacing:0.6px;text-align:center">2<span style="letter-spacing:1.1px">,</span>250<span style="letter-spacing:1.1px">,</span>000</div>
<div class="t" style="left:1223px;top:564px;width:140.6px;height:24px;line-height:24px;font-size:14.5px;color:#1a1a1a;letter-spacing:0.6px;text-align:center">5<span style="letter-spacing:1.1px">,</span>434<span style="letter-spacing:1.1px">,</span>200</div>
<div class="t" style="left:1363px;top:564px;width:139.6px;height:24px;line-height:24px;font-size:14.5px;color:#1a1a1a;letter-spacing:0.6px;text-align:center">27<span style="letter-spacing:1.1px">,</span>544</div>
<div class="t" style="left:42px;top:588px;width:68px;height:24px;line-height:24px;font-size:12.5px;color:#222;white-space:nowrap;overflow:hidden;letter-spacing:0.45px"><span style="margin-left:-0.6px;letter-spacing:-0.2px">1</span><span style="margin-left:-0.6px;letter-spacing:-0.2px">1</span>0<span style="margin-left:-0.6px;letter-spacing:-0.2px">1</span> ЭХ</div>
<div class="t" style="left:111px;top:588px;width:48px;height:24px;line-height:24px;font-size:14.5px;color:#ececec;text-align:right;overflow:hidden;white-space:nowrap">Шүүлт</div>
<div class="t" style="left:167px;top:588px;width:380px;height:24px;line-height:24px;font-size:14.5px;color:#1a1a1a;white-space:nowrap;letter-spacing:0.25px;color:#262626">Богино хугацаат хөрөнгө-ХХБФ</div>
<div class="t" style="left:551px;top:588px;width:129.6px;height:24px;line-height:24px;font-size:14.5px;color:#1a1a1a;letter-spacing:0.6px;text-align:right">42<span style="margin-left:-1.3px;letter-spacing:-1.3px">1</span><span style="letter-spacing:1.1px">,</span><span style="margin-left:-1.3px;letter-spacing:-1.3px">1</span>76<span style="letter-spacing:1.1px">.</span>95</div>
<div class="t" style="left:817px;top:588px;width:129.6px;height:24px;line-height:24px;font-size:14.5px;color:#1a1a1a;letter-spacing:0.6px;text-align:right">42<span style="margin-left:-1.3px;letter-spacing:-1.3px">1</span><span style="letter-spacing:1.1px">,</span><span style="margin-left:-1.3px;letter-spacing:-1.3px">1</span>76<span style="letter-spacing:1.1px">.</span>95</div>
<div class="t" style="left:1223px;top:588px;width:140.6px;height:24px;line-height:24px;font-size:14.5px;color:#1a1a1a;letter-spacing:0.6px;text-align:center">2<span style="letter-spacing:1.1px">,</span>975</div>
<div class="t" style="left:1363px;top:588px;width:139.6px;height:24px;line-height:24px;font-size:14.5px;color:#1a1a1a;letter-spacing:0.6px;text-align:center">4<span style="margin-left:-1.3px;letter-spacing:-1.3px">1</span>8<span style="letter-spacing:1.1px">,</span>202</div>
<div class="t" style="left:42px;top:613px;width:68px;height:25px;line-height:25px;font-size:12.5px;color:#e02020;white-space:nowrap;overflow:hidden;letter-spacing:0.45px"><span style="margin-left:-0.6px;letter-spacing:-0.2px">1</span>204 ЭХ</div>
<div class="t" style="left:111px;top:613px;width:48px;height:25px;line-height:25px;font-size:14.5px;color:#ececec;text-align:right;overflow:hidden;white-space:nowrap">Шүүлт</div>
<div class="t" style="left:167px;top:613px;width:380px;height:25px;line-height:25px;font-size:14.5px;color:#1a1a1a;white-space:nowrap;letter-spacing:0.25px;color:#262626">Борлуулалтын авлага-БОА</div>
<div class="t" style="left:551px;top:613px;width:129.6px;height:25px;line-height:25px;font-size:14.5px;color:#1a1a1a;letter-spacing:0.6px;text-align:right">44<span style="letter-spacing:1.1px">,</span><span style="margin-left:-1.3px;letter-spacing:-1.3px">1</span>54<span style="letter-spacing:1.1px">,</span>820<span style="letter-spacing:1.1px">.</span>25</div>
<div class="t" style="left:817px;top:613px;width:129.6px;height:25px;line-height:25px;font-size:14.5px;color:#1a1a1a;letter-spacing:0.6px;text-align:right">44<span style="letter-spacing:1.1px">,</span><span style="margin-left:-1.3px;letter-spacing:-1.3px">1</span>54<span style="letter-spacing:1.1px">,</span>820<span style="letter-spacing:1.1px">.</span>25</div>
<div class="t" style="left:1083px;top:613px;width:140.6px;height:25px;line-height:25px;font-size:14.5px;color:#1a1a1a;letter-spacing:0.6px;text-align:center"><span style="margin-left:-1.3px;letter-spacing:-1.3px">1</span>94<span style="letter-spacing:1.1px">,</span><span style="margin-left:-1.3px;letter-spacing:-1.3px">1</span><span style="margin-left:-1.3px;letter-spacing:-1.3px">1</span><span style="margin-left:-1.3px;letter-spacing:-1.3px">1</span><span style="letter-spacing:1.1px">,</span><span style="margin-left:-1.3px;letter-spacing:-1.3px">1</span><span style="margin-left:-1.3px;letter-spacing:-1.3px">1</span>7</div>
<div class="t" style="left:1223px;top:613px;width:140.6px;height:25px;line-height:25px;font-size:14.5px;color:#1a1a1a;letter-spacing:0.6px;text-align:center"><span style="margin-left:-1.3px;letter-spacing:-1.3px">1</span><span style="margin-left:-1.3px;letter-spacing:-1.3px">1</span><span style="margin-left:-1.3px;letter-spacing:-1.3px">1</span><span style="letter-spacing:1.1px">,</span>733<span style="letter-spacing:1.1px">,</span>279</div>
<div class="t" style="left:1363px;top:613px;width:139.6px;height:25px;line-height:25px;font-size:14.5px;color:#1a1a1a;letter-spacing:0.6px;text-align:center"><span style="margin-left:-1.3px;letter-spacing:-1.3px">1</span>26<span style="letter-spacing:1.1px">,</span>532<span style="letter-spacing:1.1px">,</span>659</div>
<div style="left:1860px;top:613px;width:34px;height:25px;overflow:hidden"><div class="t" style="left:27px;top:0;width:72px;height:25px;line-height:25px;font-size:14.5px;color:#1a1a1a;letter-spacing:0.6px;text-align:left"><span style="margin-left:-1.3px;letter-spacing:-1.3px">1</span>2,000</div></div>
<div class="t" style="left:42px;top:639px;width:68px;height:25px;line-height:25px;font-size:12.5px;color:#222;white-space:nowrap;overflow:hidden;letter-spacing:0.45px"><span style="margin-left:-0.6px;letter-spacing:-0.2px">1</span>40<span style="margin-left:-0.6px;letter-spacing:-0.2px">1</span> ЭХ</div>
<div class="t" style="left:111px;top:639px;width:48px;height:25px;line-height:25px;font-size:14.5px;color:#ececec;text-align:right;overflow:hidden;white-space:nowrap">Шүүлт</div>
<div class="t" style="left:167px;top:639px;width:380px;height:25px;line-height:25px;font-size:14.5px;color:#1a1a1a;white-space:nowrap;letter-spacing:0.25px;color:#262626">Түүхий эд материал-ТЭМ</div>
<div class="t" style="left:551px;top:639px;width:129.6px;height:25px;line-height:25px;font-size:14.5px;color:#1a1a1a;letter-spacing:0.6px;text-align:right">96<span style="letter-spacing:1.1px">,</span>004<span style="letter-spacing:1.1px">,</span>825<span style="letter-spacing:1.1px">.</span>04</div>
<div class="t" style="left:817px;top:639px;width:129.6px;height:25px;line-height:25px;font-size:14.5px;color:#1a1a1a;letter-spacing:0.6px;text-align:right">96<span style="letter-spacing:1.1px">,</span>004<span style="letter-spacing:1.1px">,</span>825<span style="letter-spacing:1.1px">.</span>04</div>
<div class="t" style="left:1083px;top:639px;width:140.6px;height:25px;line-height:25px;font-size:14.5px;color:#1a1a1a;letter-spacing:0.6px;text-align:center"><span style="margin-left:-1.3px;letter-spacing:-1.3px">1</span>3<span style="letter-spacing:1.1px">,</span>028<span style="letter-spacing:1.1px">,</span>74<span style="margin-left:-1.3px;letter-spacing:-1.3px">1</span></div>
<div class="t" style="left:1363px;top:639px;width:139.6px;height:25px;line-height:25px;font-size:14.5px;color:#1a1a1a;letter-spacing:0.6px;text-align:center"><span style="margin-left:-1.3px;letter-spacing:-1.3px">1</span>09<span style="letter-spacing:1.1px">,</span>033<span style="letter-spacing:1.1px">,</span>566</div>
<div style="left:1860px;top:639px;width:34px;height:25px;overflow:hidden"><div class="t" style="left:27px;top:0;width:72px;height:25px;line-height:25px;font-size:14.5px;color:#1a1a1a;letter-spacing:0.6px;text-align:left"><span style="margin-left:-1.3px;letter-spacing:-1.3px">1</span>0,000</div></div>
<div class="t" style="left:42px;top:665px;width:68px;height:25px;line-height:25px;font-size:12.5px;color:#e02020;white-space:nowrap;overflow:hidden;letter-spacing:0.45px"><span style="margin-left:-0.6px;letter-spacing:-0.2px">1</span>602 ЭХ</div>
<div class="t" style="left:111px;top:665px;width:48px;height:25px;line-height:25px;font-size:14.5px;color:#ececec;text-align:right;overflow:hidden;white-space:nowrap">Шүүлт</div>
<div class="t" style="left:167px;top:665px;width:380px;height:25px;line-height:25px;font-size:14.5px;color:#1a1a1a;white-space:nowrap;letter-spacing:0.25px;color:#262626">Урьдчилж төлсөн тооцоо-УТТ</div>
<div class="t" style="left:551px;top:665px;width:129.6px;height:25px;line-height:25px;font-size:14.5px;color:#1a1a1a;letter-spacing:0.6px;text-align:right">660<span style="letter-spacing:1.1px">,</span>000<span style="letter-spacing:1.1px">.</span>45</div>
<div class="t" style="left:817px;top:665px;width:129.6px;height:25px;line-height:25px;font-size:14.5px;color:#1a1a1a;letter-spacing:0.6px;text-align:right">660<span style="letter-spacing:1.1px">,</span>000<span style="letter-spacing:1.1px">.</span>45</div>
<div class="t" style="left:1363px;top:665px;width:139.6px;height:25px;line-height:25px;font-size:14.5px;color:#1a1a1a;letter-spacing:0.6px;text-align:center">660<span style="letter-spacing:1.1px">,</span>000</div>
<div class="t" style="left:42px;top:691px;width:68px;height:25px;line-height:25px;font-size:12.5px;color:#222;white-space:nowrap;overflow:hidden;letter-spacing:0.45px">2002 ЭБХ</div>
<div class="t" style="left:111px;top:691px;width:48px;height:25px;line-height:25px;font-size:14.5px;color:#ececec;text-align:right;overflow:hidden;white-space:nowrap">Шүүлт</div>
<div class="t" style="left:167px;top:691px;width:380px;height:25px;line-height:25px;font-size:14.5px;color:#1a1a1a;white-space:nowrap;letter-spacing:0.25px;color:#262626">Машин, тоног төхөөрөмж-МТТ</div>
<div class="t" style="left:551px;top:691px;width:129.6px;height:25px;line-height:25px;font-size:14.5px;color:#1a1a1a;letter-spacing:0.6px;text-align:right">5<span style="margin-left:-1.3px;letter-spacing:-1.3px">1</span><span style="letter-spacing:1.1px">,</span>350<span style="letter-spacing:1.1px">,</span>000<span style="letter-spacing:1.1px">.</span>00</div>
<div class="t" style="left:817px;top:691px;width:129.6px;height:25px;line-height:25px;font-size:14.5px;color:#1a1a1a;letter-spacing:0.6px;text-align:right">5<span style="margin-left:-1.3px;letter-spacing:-1.3px">1</span><span style="letter-spacing:1.1px">,</span>350<span style="letter-spacing:1.1px">,</span>000<span style="letter-spacing:1.1px">.</span>00</div>
<div class="t" style="left:1363px;top:691px;width:139.6px;height:25px;line-height:25px;font-size:14.5px;color:#1a1a1a;letter-spacing:0.6px;text-align:center">5<span style="margin-left:-1.3px;letter-spacing:-1.3px">1</span><span style="letter-spacing:1.1px">,</span>350<span style="letter-spacing:1.1px">,</span>000</div>
<div style="left:1860px;top:691px;width:34px;height:25px;overflow:hidden"><div class="t" style="left:27px;top:0;width:72px;height:25px;line-height:25px;font-size:14.5px;color:#1a1a1a;letter-spacing:0.6px;text-align:left">5,000</div></div>
<div class="t" style="left:42px;top:716px;width:68px;height:24px;line-height:24px;font-size:12.5px;color:#222;white-space:nowrap;overflow:hidden;letter-spacing:0.45px">20<span style="margin-left:-0.6px;letter-spacing:-0.2px">1</span>2 ЭБХ</div>
<div class="t" style="left:111px;top:716px;width:48px;height:24px;line-height:24px;font-size:14.5px;color:#ececec;text-align:right;overflow:hidden;white-space:nowrap">Шүүлт</div>
<div class="t" style="left:167px;top:716px;width:380px;height:24px;line-height:24px;font-size:14.5px;color:#1a1a1a;white-space:nowrap;letter-spacing:0.25px;color:#262626">Хуримтлагдсан элэгдэл. МТТ-ХЭ.МТТ</div>
<div class="t" style="left:551px;top:716px;width:129.6px;height:24px;line-height:24px;font-size:14.5px;color:#1a1a1a;letter-spacing:0.6px;text-align:right">-29<span style="letter-spacing:1.1px">,</span>43<span style="margin-left:-1.3px;letter-spacing:-1.3px">1</span><span style="letter-spacing:1.1px">,</span>397<span style="letter-spacing:1.1px">.</span>26</div>
<div class="t" style="left:817px;top:716px;width:129.6px;height:24px;line-height:24px;font-size:14.5px;color:#1a1a1a;letter-spacing:0.6px;text-align:right">-29<span style="letter-spacing:1.1px">,</span>43<span style="margin-left:-1.3px;letter-spacing:-1.3px">1</span><span style="letter-spacing:1.1px">,</span>397<span style="letter-spacing:1.1px">.</span>26</div>
<div class="t" style="left:1502px;top:716px;width:139.6px;height:24px;line-height:24px;font-size:14.5px;color:#1a1a1a;letter-spacing:0.6px;text-align:center">29<span style="letter-spacing:1.1px">,</span>43<span style="margin-left:-1.3px;letter-spacing:-1.3px">1</span><span style="letter-spacing:1.1px">,</span>397</div>
<div class="t" style="left:42px;top:740px;width:68px;height:26px;line-height:26px;font-size:12.5px;color:#222;white-space:nowrap;overflow:hidden;letter-spacing:0.45px">2003 ЭБХ</div>
<div class="t" style="left:111px;top:740px;width:48px;height:26px;line-height:26px;font-size:14.5px;color:#ececec;text-align:right;overflow:hidden;white-space:nowrap">Шүүлт</div>
<div class="t" style="left:167px;top:740px;width:380px;height:26px;line-height:26px;font-size:14.5px;color:#1a1a1a;white-space:nowrap;letter-spacing:0.25px;color:#262626">Тээврийн хэрэгсэл-ТХ</div>
<div class="t" style="left:551px;top:740px;width:129.6px;height:26px;line-height:26px;font-size:14.5px;color:#1a1a1a;letter-spacing:0.6px;text-align:right">44<span style="letter-spacing:1.1px">,</span>000<span style="letter-spacing:1.1px">,</span>000<span style="letter-spacing:1.1px">.</span>00</div>
<div class="t" style="left:817px;top:740px;width:129.6px;height:26px;line-height:26px;font-size:14.5px;color:#1a1a1a;letter-spacing:0.6px;text-align:right">44<span style="letter-spacing:1.1px">,</span>000<span style="letter-spacing:1.1px">,</span>000<span style="letter-spacing:1.1px">.</span>00</div>
<div class="t" style="left:1363px;top:740px;width:139.6px;height:26px;line-height:26px;font-size:14.5px;color:#1a1a1a;letter-spacing:0.6px;text-align:center">44<span style="letter-spacing:1.1px">,</span>000<span style="letter-spacing:1.1px">,</span>000</div>
<div style="left:1860px;top:740px;width:34px;height:26px;overflow:hidden"><div class="t" style="left:27px;top:0;width:72px;height:26px;line-height:26px;font-size:14.5px;color:#1a1a1a;letter-spacing:0.6px;text-align:left">4,000</div></div>
<div class="t" style="left:42px;top:766px;width:68px;height:24px;line-height:24px;font-size:12.5px;color:#222;white-space:nowrap;overflow:hidden;letter-spacing:0.45px">20<span style="margin-left:-0.6px;letter-spacing:-0.2px">1</span>3 ЭБХ</div>
<div class="t" style="left:111px;top:766px;width:48px;height:24px;line-height:24px;font-size:14.5px;color:#ececec;text-align:right;overflow:hidden;white-space:nowrap">Шүүлт</div>
<div class="t" style="left:167px;top:766px;width:380px;height:24px;line-height:24px;font-size:14.5px;color:#1a1a1a;white-space:nowrap;letter-spacing:0.25px;color:#262626">Хуримтлагдсан элэгдэл. Тээвэр-ХЭ.ТХ</div>
<div class="t" style="left:551px;top:766px;width:129.6px;height:24px;line-height:24px;font-size:14.5px;color:#1a1a1a;letter-spacing:0.6px;text-align:right">-33<span style="letter-spacing:1.1px">,</span>032<span style="letter-spacing:1.1px">,</span>876<span style="letter-spacing:1.1px">.</span>7<span style="margin-left:-1.3px;letter-spacing:-1.3px">1</span></div>
<div class="t" style="left:817px;top:766px;width:129.6px;height:24px;line-height:24px;font-size:14.5px;color:#1a1a1a;letter-spacing:0.6px;text-align:right">-33<span style="letter-spacing:1.1px">,</span>032<span style="letter-spacing:1.1px">,</span>876<span style="letter-spacing:1.1px">.</span>7<span style="margin-left:-1.3px;letter-spacing:-1.3px">1</span></div>
<div class="t" style="left:1502px;top:766px;width:139.6px;height:24px;line-height:24px;font-size:14.5px;color:#1a1a1a;letter-spacing:0.6px;text-align:center">33<span style="letter-spacing:1.1px">,</span>032<span style="letter-spacing:1.1px">,</span>877</div>
<div class="t" style="left:42px;top:790px;width:68px;height:24px;line-height:24px;font-size:12.5px;color:#222;white-space:nowrap;overflow:hidden;letter-spacing:0.45px">2004 ЭБХ</div>
<div class="t" style="left:111px;top:790px;width:48px;height:24px;line-height:24px;font-size:14.5px;color:#ececec;text-align:right;overflow:hidden;white-space:nowrap">Шүүлт</div>
<div class="t" style="left:167px;top:790px;width:380px;height:24px;line-height:24px;font-size:14.5px;color:#1a1a1a;white-space:nowrap;letter-spacing:0.25px;color:#262626">Тавилга эд хогшил-ТЭХ</div>
<div class="t" style="left:551px;top:790px;width:129.6px;height:24px;line-height:24px;font-size:14.5px;color:#1a1a1a;letter-spacing:0.6px;text-align:right"><span style="margin-left:-1.3px;letter-spacing:-1.3px">1</span><span style="letter-spacing:1.1px">,</span>900<span style="letter-spacing:1.1px">,</span>000<span style="letter-spacing:1.1px">.</span>00</div>
<div class="t" style="left:817px;top:790px;width:129.6px;height:24px;line-height:24px;font-size:14.5px;color:#1a1a1a;letter-spacing:0.6px;text-align:right"><span style="margin-left:-1.3px;letter-spacing:-1.3px">1</span><span style="letter-spacing:1.1px">,</span>900<span style="letter-spacing:1.1px">,</span>000<span style="letter-spacing:1.1px">.</span>00</div>
<div class="t" style="left:1363px;top:790px;width:139.6px;height:24px;line-height:24px;font-size:14.5px;color:#1a1a1a;letter-spacing:0.6px;text-align:center"><span style="margin-left:-1.3px;letter-spacing:-1.3px">1</span><span style="letter-spacing:1.1px">,</span>900<span style="letter-spacing:1.1px">,</span>000</div>
<div class="t" style="left:42px;top:814px;width:68px;height:24px;line-height:24px;font-size:12.5px;color:#222;white-space:nowrap;overflow:hidden;letter-spacing:0.45px">20<span style="margin-left:-0.6px;letter-spacing:-0.2px">1</span>4 ЭБХ</div>
<div class="t" style="left:111px;top:814px;width:48px;height:24px;line-height:24px;font-size:14.5px;color:#ececec;text-align:right;overflow:hidden;white-space:nowrap">Шүүлт</div>
<div class="t" style="left:167px;top:814px;width:380px;height:24px;line-height:24px;font-size:14.5px;color:#1a1a1a;white-space:nowrap;letter-spacing:0.25px;color:#262626">Хуримтлагдсан элэгдэл. ТЭХ-ХЭ.ТЭХ</div>
<div class="t" style="left:551px;top:814px;width:129.6px;height:24px;line-height:24px;font-size:14.5px;color:#1a1a1a;letter-spacing:0.6px;text-align:right">-<span style="margin-left:-1.3px;letter-spacing:-1.3px">1</span><span style="letter-spacing:1.1px">,</span>093<span style="letter-spacing:1.1px">,</span><span style="margin-left:-1.3px;letter-spacing:-1.3px">1</span>50<span style="letter-spacing:1.1px">.</span>68</div>
<div class="t" style="left:817px;top:814px;width:129.6px;height:24px;line-height:24px;font-size:14.5px;color:#1a1a1a;letter-spacing:0.6px;text-align:right">-<span style="margin-left:-1.3px;letter-spacing:-1.3px">1</span><span style="letter-spacing:1.1px">,</span>093<span style="letter-spacing:1.1px">,</span><span style="margin-left:-1.3px;letter-spacing:-1.3px">1</span>50<span style="letter-spacing:1.1px">.</span>68</div>
<div class="t" style="left:1502px;top:814px;width:139.6px;height:24px;line-height:24px;font-size:14.5px;color:#1a1a1a;letter-spacing:0.6px;text-align:center"><span style="margin-left:-1.3px;letter-spacing:-1.3px">1</span><span style="letter-spacing:1.1px">,</span>093<span style="letter-spacing:1.1px">,</span><span style="margin-left:-1.3px;letter-spacing:-1.3px">1</span>5<span style="margin-left:-1.3px;letter-spacing:-1.3px">1</span></div>
<div class="t" style="left:42px;top:839px;width:68px;height:23px;line-height:23px;font-size:12.5px;color:#222;white-space:nowrap;overflow:hidden;letter-spacing:0.45px">2006 ЭБХ</div>
<div class="t" style="left:111px;top:839px;width:48px;height:23px;line-height:23px;font-size:14.5px;color:#ececec;text-align:right;overflow:hidden;white-space:nowrap">Шүүлт</div>
<div class="t" style="left:167px;top:839px;width:380px;height:23px;line-height:23px;font-size:14.5px;color:#1a1a1a;white-space:nowrap;letter-spacing:0.25px;color:#262626">Бусад үндсэн хөрөнгө-БҮХ</div>
<div class="t" style="left:551px;top:839px;width:129.6px;height:23px;line-height:23px;font-size:14.5px;color:#1a1a1a;letter-spacing:0.6px;text-align:right"><span style="margin-left:-1.3px;letter-spacing:-1.3px">1</span>50<span style="letter-spacing:1.1px">,</span>000<span style="letter-spacing:1.1px">.</span>00</div>
<div class="t" style="left:817px;top:839px;width:129.6px;height:23px;line-height:23px;font-size:14.5px;color:#1a1a1a;letter-spacing:0.6px;text-align:right"><span style="margin-left:-1.3px;letter-spacing:-1.3px">1</span>50<span style="letter-spacing:1.1px">,</span>000<span style="letter-spacing:1.1px">.</span>00</div>
<div class="t" style="left:1363px;top:839px;width:139.6px;height:23px;line-height:23px;font-size:14.5px;color:#1a1a1a;letter-spacing:0.6px;text-align:center"><span style="margin-left:-1.3px;letter-spacing:-1.3px">1</span>50<span style="letter-spacing:1.1px">,</span>000</div>
<div class="t" style="left:42px;top:862px;width:68px;height:24px;line-height:24px;font-size:12.5px;color:#222;white-space:nowrap;overflow:hidden;letter-spacing:0.45px">20<span style="margin-left:-0.6px;letter-spacing:-0.2px">1</span>6 ЭБХ</div>
<div class="t" style="left:111px;top:862px;width:48px;height:24px;line-height:24px;font-size:14.5px;color:#ececec;text-align:right;overflow:hidden;white-space:nowrap">Шүүлт</div>
<div class="t" style="left:167px;top:862px;width:380px;height:24px;line-height:24px;font-size:14.5px;color:#1a1a1a;white-space:nowrap;letter-spacing:0.25px;color:#262626">Хуримтлагдсан элэгдэл. БҮХ-ХЭ.БҮХ</div>
<div class="t" style="left:551px;top:862px;width:129.6px;height:24px;line-height:24px;font-size:14.5px;color:#1a1a1a;letter-spacing:0.6px;text-align:right">-5<span style="margin-left:-1.3px;letter-spacing:-1.3px">1</span><span style="letter-spacing:1.1px">,</span>780<span style="letter-spacing:1.1px">.</span>82</div>
<div class="t" style="left:817px;top:862px;width:129.6px;height:24px;line-height:24px;font-size:14.5px;color:#1a1a1a;letter-spacing:0.6px;text-align:right">-5<span style="margin-left:-1.3px;letter-spacing:-1.3px">1</span><span style="letter-spacing:1.1px">,</span>780<span style="letter-spacing:1.1px">.</span>82</div>
<div class="t" style="left:1502px;top:862px;width:139.6px;height:24px;line-height:24px;font-size:14.5px;color:#1a1a1a;letter-spacing:0.6px;text-align:center">5<span style="margin-left:-1.3px;letter-spacing:-1.3px">1</span><span style="letter-spacing:1.1px">,</span>78<span style="margin-left:-1.3px;letter-spacing:-1.3px">1</span></div>
<div class="t" style="left:42px;top:887px;width:68px;height:25px;line-height:25px;font-size:12.5px;color:#222;white-space:nowrap;overflow:hidden;letter-spacing:0.45px"><span style="margin-left:-0.6px;letter-spacing:-0.2px">1</span>206 ЭХ</div>
<div class="t" style="left:111px;top:887px;width:48px;height:25px;line-height:25px;font-size:14.5px;color:#ececec;text-align:right;overflow:hidden;white-space:nowrap">Шүүлт</div>
<div class="t" style="left:167px;top:887px;width:380px;height:25px;line-height:25px;font-size:14.5px;color:#1a1a1a;white-space:nowrap;letter-spacing:0.25px;color:#262626">НӨАТ-ын тооцоо /тт-03а/-НӨТӨ</div>
<div class="t" style="left:551px;top:887px;width:129.6px;height:25px;line-height:25px;font-size:14.5px;color:#1a1a1a;letter-spacing:0.6px;text-align:right"><span style="margin-left:-1.3px;letter-spacing:-1.3px">1</span>86<span style="letter-spacing:1.1px">,</span>503<span style="letter-spacing:1.1px">,</span>450<span style="letter-spacing:1.1px">.</span>70</div>
<div class="t" style="left:817px;top:887px;width:129.6px;height:25px;line-height:25px;font-size:14.5px;color:#1a1a1a;letter-spacing:0.6px;text-align:right"><span style="margin-left:-1.3px;letter-spacing:-1.3px">1</span>86<span style="letter-spacing:1.1px">,</span>503<span style="letter-spacing:1.1px">,</span>450<span style="letter-spacing:1.1px">.</span>70</div>
<div class="t" style="left:1083px;top:887px;width:140.6px;height:25px;line-height:25px;font-size:14.5px;color:#1a1a1a;letter-spacing:0.6px;text-align:center"><span style="margin-left:-1.3px;letter-spacing:-1.3px">1</span><span style="letter-spacing:1.1px">,</span>460<span style="letter-spacing:1.1px">,</span>403</div>
<div class="t" style="left:1223px;top:887px;width:140.6px;height:25px;line-height:25px;font-size:14.5px;color:#1a1a1a;letter-spacing:0.6px;text-align:center">3<span style="letter-spacing:1.1px">,</span><span style="margin-left:-1.3px;letter-spacing:-1.3px">1</span><span style="margin-left:-1.3px;letter-spacing:-1.3px">1</span>3<span style="letter-spacing:1.1px">,</span>636</div>
<div class="t" style="left:1363px;top:887px;width:139.6px;height:25px;line-height:25px;font-size:14.5px;color:#1a1a1a;letter-spacing:0.6px;text-align:center"><span style="margin-left:-1.3px;letter-spacing:-1.3px">1</span>84<span style="letter-spacing:1.1px">,</span>850<span style="letter-spacing:1.1px">,</span>2<span style="margin-left:-1.3px;letter-spacing:-1.3px">1</span>7</div>
<div style="left:1860px;top:887px;width:34px;height:25px;overflow:hidden"><div class="t" style="left:27px;top:0;width:72px;height:25px;line-height:25px;font-size:14.5px;color:#1a1a1a;letter-spacing:0.6px;text-align:left"><span style="margin-left:-1.3px;letter-spacing:-1.3px">1</span>,000</div></div>
<div class="t" style="left:42px;top:912px;width:68px;height:26px;line-height:26px;font-size:12.5px;color:#222;white-space:nowrap;overflow:hidden;letter-spacing:0.45px"><span style="margin-left:-0.6px;letter-spacing:-0.2px">1</span>207 ЭХ</div>
<div class="t" style="left:111px;top:912px;width:48px;height:26px;line-height:26px;font-size:14.5px;color:#ececec;text-align:right;overflow:hidden;white-space:nowrap">Шүүлт</div>
<div class="t" style="left:167px;top:912px;width:380px;height:26px;line-height:26px;font-size:14.5px;color:#1a1a1a;white-space:nowrap;letter-spacing:0.25px;color:#262626">Орлогын татварын тооцоо ТТ-02-ОАТӨ</div>
<div class="t" style="left:684px;top:912px;width:129.6px;height:26px;line-height:26px;font-size:14.5px;color:#1a1a1a;letter-spacing:0.6px;text-align:right">6<span style="letter-spacing:1.1px">,</span>708<span style="letter-spacing:1.1px">,</span>446<span style="letter-spacing:1.1px">.</span>93</div>
<div class="t" style="left:950px;top:912px;width:129.6px;height:26px;line-height:26px;font-size:14.5px;color:#1a1a1a;letter-spacing:0.6px;text-align:right">6<span style="letter-spacing:1.1px">,</span>708<span style="letter-spacing:1.1px">,</span>446<span style="letter-spacing:1.1px">.</span>93</div>
<div class="t" style="left:1083px;top:912px;width:140.6px;height:26px;line-height:26px;font-size:14.5px;color:#1a1a1a;letter-spacing:0.6px;text-align:center"><span style="margin-left:-1.3px;letter-spacing:-1.3px">1</span>82</div>
<div class="t" style="left:1502px;top:912px;width:139.6px;height:26px;line-height:26px;font-size:14.5px;color:#1a1a1a;letter-spacing:0.6px;text-align:center">6<span style="letter-spacing:1.1px">,</span>708<span style="letter-spacing:1.1px">,</span>265</div>
<div class="t" style="left:1750px;top:912px;width:109.6px;height:26px;line-height:26px;font-size:14.5px;color:#1a1a1a;letter-spacing:0.6px;text-align:center">2<span style="letter-spacing:1.1px">,</span><span style="margin-left:-1.3px;letter-spacing:-1.3px">1</span>3<span style="margin-left:-1.3px;letter-spacing:-1.3px">1</span><span style="letter-spacing:1.1px">,</span>620</div>
<div class="t" style="left:42px;top:938px;width:68px;height:26px;line-height:26px;font-size:12.5px;color:#222;white-space:nowrap;overflow:hidden;letter-spacing:0.45px"><span style="margin-left:-0.6px;letter-spacing:-0.2px">1</span>208 БХӨТ</div>
<div class="t" style="left:111px;top:938px;width:48px;height:26px;line-height:26px;font-size:14.5px;color:#ececec;text-align:right;overflow:hidden;white-space:nowrap">Шүүлт</div>
<div class="t" style="left:167px;top:938px;width:380px;height:26px;line-height:26px;font-size:14.5px;color:#1a1a1a;white-space:nowrap;letter-spacing:0.25px;color:#262626">ХАОАТ-ын тооцоо /Суутган-1/-ХАОАТ1</div>
<div class="t" style="left:551px;top:938px;width:129.6px;height:26px;line-height:26px;font-size:14.5px;color:#1a1a1a;letter-spacing:0.6px;text-align:right"><span style="margin-left:-1.3px;letter-spacing:-1.3px">1</span>0<span style="letter-spacing:1.1px">.</span>24</div>
<div class="t" style="left:817px;top:938px;width:129.6px;height:26px;line-height:26px;font-size:14.5px;color:#1a1a1a;letter-spacing:0.6px;text-align:right"><span style="margin-left:-1.3px;letter-spacing:-1.3px">1</span>0<span style="letter-spacing:1.1px">.</span>24</div>
<div class="t" style="left:1083px;top:938px;width:140.6px;height:26px;line-height:26px;font-size:14.5px;color:#1a1a1a;letter-spacing:0.6px;text-align:center"><span style="margin-left:-1.3px;letter-spacing:-1.3px">1</span>33<span style="letter-spacing:1.1px">,</span>740</div>
<div class="t" style="left:1223px;top:938px;width:140.6px;height:26px;line-height:26px;font-size:14.5px;color:#1a1a1a;letter-spacing:0.6px;text-align:center">353<span style="letter-spacing:1.1px">,</span>400</div>
<div class="t" style="left:1502px;top:938px;width:139.6px;height:26px;line-height:26px;font-size:14.5px;color:#1a1a1a;letter-spacing:0.6px;text-align:center">2<span style="margin-left:-1.3px;letter-spacing:-1.3px">1</span>9<span style="letter-spacing:1.1px">,</span>650</div>
<div class="t" style="left:42px;top:965px;width:68px;height:25px;line-height:25px;font-size:12.5px;color:#222;white-space:nowrap;overflow:hidden;letter-spacing:0.45px"><span style="margin-left:-0.6px;letter-spacing:-0.2px">1</span>2<span style="margin-left:-0.6px;letter-spacing:-0.2px">1</span>0 ЭХ</div>
<div class="t" style="left:111px;top:965px;width:48px;height:25px;line-height:25px;font-size:14.5px;color:#ececec;text-align:right;overflow:hidden;white-space:nowrap">Шүүлт</div>
<div class="t" style="left:167px;top:965px;width:380px;height:25px;line-height:25px;font-size:14.5px;color:#1a1a1a;white-space:nowrap;letter-spacing:0.25px;color:#262626">ЭМНД-ийн шимтгэлийн тооцоо-НДШӨ</div>
<div class="t" style="left:551px;top:965px;width:129.6px;height:25px;line-height:25px;font-size:14.5px;color:#1a1a1a;letter-spacing:0.6px;text-align:right">4<span style="letter-spacing:1.1px">.</span>58</div>
<div class="t" style="left:817px;top:965px;width:129.6px;height:25px;line-height:25px;font-size:14.5px;color:#1a1a1a;letter-spacing:0.6px;text-align:right">4<span style="letter-spacing:1.1px">.</span>58</div>
<div class="t" style="left:1083px;top:965px;width:140.6px;height:25px;line-height:25px;font-size:14.5px;color:#1a1a1a;letter-spacing:0.6px;text-align:center"><span style="margin-left:-1.3px;letter-spacing:-1.3px">1</span><span style="letter-spacing:1.1px">,</span>607<span style="letter-spacing:1.1px">,</span>030</div>
<div class="t" style="left:1223px;top:965px;width:140.6px;height:25px;line-height:25px;font-size:14.5px;color:#1a1a1a;letter-spacing:0.6px;text-align:center">2<span style="letter-spacing:1.1px">,</span><span style="margin-left:-1.3px;letter-spacing:-1.3px">1</span>99<span style="letter-spacing:1.1px">,</span>600</div>
<div class="t" style="left:1502px;top:965px;width:139.6px;height:25px;line-height:25px;font-size:14.5px;color:#1a1a1a;letter-spacing:0.6px;text-align:center">592<span style="letter-spacing:1.1px">,</span>565</div>
<div class="t" style="left:42px;top:990px;width:68px;height:26px;line-height:26px;font-size:12.5px;color:#222;white-space:nowrap;overflow:hidden;letter-spacing:0.45px">3<span style="margin-left:-0.6px;letter-spacing:-0.2px">1</span>05 БХӨТ</div>
<div class="t" style="left:111px;top:990px;width:48px;height:26px;line-height:26px;font-size:14.5px;color:#ececec;text-align:right;overflow:hidden;white-space:nowrap">Шүүлт</div>
<div class="t" style="left:167px;top:990px;width:380px;height:26px;line-height:26px;font-size:14.5px;color:#1a1a1a;white-space:nowrap;letter-spacing:0.25px;color:#262626">Цалингийн өглөг-ЦӨ</div>
<div class="t" style="left:1083px;top:990px;width:140.6px;height:26px;line-height:26px;font-size:14.5px;color:#1a1a1a;letter-spacing:0.6px;text-align:center"><span style="margin-left:-1.3px;letter-spacing:-1.3px">1</span><span style="letter-spacing:1.1px">,</span>330<span style="letter-spacing:1.1px">,</span>900</div>
<div class="t" style="left:1223px;top:990px;width:140.6px;height:26px;line-height:26px;font-size:14.5px;color:#1a1a1a;letter-spacing:0.6px;text-align:center">8<span style="letter-spacing:1.1px">,</span>500<span style="letter-spacing:1.1px">,</span>000</div>
<div class="t" style="left:1502px;top:990px;width:139.6px;height:26px;line-height:26px;font-size:14.5px;color:#1a1a1a;letter-spacing:0.6px;text-align:center">7<span style="letter-spacing:1.1px">,</span><span style="margin-left:-1.3px;letter-spacing:-1.3px">1</span>69<span style="letter-spacing:1.1px">,</span><span style="margin-left:-1.3px;letter-spacing:-1.3px">1</span>00</div>
<div class="t" style="left:42px;top:1016px;width:68px;height:25px;line-height:25px;font-size:12.5px;color:#e02020;white-space:nowrap;overflow:hidden;letter-spacing:0.45px">3<span style="margin-left:-0.6px;letter-spacing:-0.2px">1</span>06 БХӨТ</div>
<div class="t" style="left:111px;top:1016px;width:48px;height:25px;line-height:25px;font-size:14.5px;color:#ececec;text-align:right;overflow:hidden;white-space:nowrap">Шүүлт</div>
<div class="t" style="left:167px;top:1016px;width:380px;height:25px;line-height:25px;font-size:14.5px;color:#1a1a1a;white-space:nowrap;letter-spacing:0.25px;color:#262626">Бэлтгэн нийлүүлэгчдэд өгөх өглөг-БНӨӨ</div>
<div class="t" style="left:684px;top:1016px;width:129.6px;height:25px;line-height:25px;font-size:14.5px;color:#1a1a1a;letter-spacing:0.6px;text-align:right">660<span style="letter-spacing:1.1px">,</span>000<span style="letter-spacing:1.1px">.</span>00</div>
<div class="t" style="left:950px;top:1016px;width:129.6px;height:25px;line-height:25px;font-size:14.5px;color:#1a1a1a;letter-spacing:0.6px;text-align:right">660<span style="letter-spacing:1.1px">,</span>000<span style="letter-spacing:1.1px">.</span>00</div>
<div class="t" style="left:1502px;top:1016px;width:139.6px;height:25px;line-height:25px;font-size:14.5px;color:#1a1a1a;letter-spacing:0.6px;text-align:center">660<span style="letter-spacing:1.1px">,</span>000</div>
<div style="left:39px;top:489px;width:124px;height:1px;background:#111"></div>
<div style="left:163px;top:489px;width:388px;height:1px;background:#a0a0a0"></div>
<div style="left:551px;top:489px;width:532px;height:1px;background:#009000"></div>
<div style="left:1083px;top:489px;width:811px;height:1px;background:#a0a0a0"></div>
<div style="left:39px;top:515px;width:124px;height:1px;background:#111"></div>
<div style="left:163px;top:515px;width:388px;height:1px;background:#a0a0a0"></div>
<div style="left:551px;top:515px;width:532px;height:1px;background:#009000"></div>
<div style="left:1083px;top:515px;width:811px;height:1px;background:#a0a0a0"></div>
<div style="left:39px;top:539px;width:124px;height:1px;background:#111"></div>
<div style="left:163px;top:539px;width:388px;height:1px;background:#a0a0a0"></div>
<div style="left:551px;top:539px;width:532px;height:1px;background:#009000"></div>
<div style="left:1083px;top:539px;width:811px;height:1px;background:#a0a0a0"></div>
<div style="left:39px;top:563px;width:124px;height:1px;background:#111"></div>
<div style="left:163px;top:563px;width:388px;height:1px;background:#a0a0a0"></div>
<div style="left:551px;top:563px;width:532px;height:1px;background:#009000"></div>
<div style="left:1083px;top:563px;width:811px;height:1px;background:#a0a0a0"></div>
<div style="left:39px;top:587px;width:124px;height:1px;background:#111"></div>
<div style="left:163px;top:587px;width:388px;height:1px;background:#a0a0a0"></div>
<div style="left:551px;top:587px;width:532px;height:1px;background:#009000"></div>
<div style="left:1083px;top:587px;width:811px;height:1px;background:#a0a0a0"></div>
<div style="left:39px;top:611px;width:124px;height:1px;background:#111"></div>
<div style="left:163px;top:611px;width:388px;height:1px;background:#a0a0a0"></div>
<div style="left:551px;top:611px;width:532px;height:1px;background:#009000"></div>
<div style="left:1083px;top:611px;width:811px;height:1px;background:#a0a0a0"></div>
<div style="left:39px;top:637px;width:124px;height:1px;background:#111"></div>
<div style="left:163px;top:637px;width:388px;height:1px;background:#a0a0a0"></div>
<div style="left:551px;top:637px;width:532px;height:1px;background:#009000"></div>
<div style="left:1083px;top:637px;width:811px;height:1px;background:#a0a0a0"></div>
<div style="left:39px;top:663px;width:124px;height:1px;background:#111"></div>
<div style="left:163px;top:663px;width:388px;height:1px;background:#a0a0a0"></div>
<div style="left:551px;top:663px;width:532px;height:1px;background:#009000"></div>
<div style="left:1083px;top:663px;width:811px;height:1px;background:#a0a0a0"></div>
<div style="left:39px;top:689px;width:124px;height:1px;background:#111"></div>
<div style="left:163px;top:689px;width:388px;height:1px;background:#a0a0a0"></div>
<div style="left:551px;top:689px;width:532px;height:1px;background:#009000"></div>
<div style="left:1083px;top:689px;width:811px;height:1px;background:#a0a0a0"></div>
<div style="left:39px;top:715px;width:124px;height:1px;background:#111"></div>
<div style="left:163px;top:715px;width:388px;height:1px;background:#a0a0a0"></div>
<div style="left:551px;top:715px;width:532px;height:1px;background:#009000"></div>
<div style="left:1083px;top:715px;width:811px;height:1px;background:#a0a0a0"></div>
<div style="left:39px;top:739px;width:124px;height:1px;background:#111"></div>
<div style="left:163px;top:739px;width:388px;height:1px;background:#a0a0a0"></div>
<div style="left:551px;top:739px;width:532px;height:1px;background:#009000"></div>
<div style="left:1083px;top:739px;width:811px;height:1px;background:#a0a0a0"></div>
<div style="left:39px;top:765px;width:124px;height:1px;background:#111"></div>
<div style="left:163px;top:765px;width:388px;height:1px;background:#a0a0a0"></div>
<div style="left:551px;top:765px;width:532px;height:1px;background:#009000"></div>
<div style="left:1083px;top:765px;width:811px;height:1px;background:#a0a0a0"></div>
<div style="left:39px;top:789px;width:124px;height:1px;background:#111"></div>
<div style="left:163px;top:789px;width:388px;height:1px;background:#a0a0a0"></div>
<div style="left:551px;top:789px;width:532px;height:1px;background:#009000"></div>
<div style="left:1083px;top:789px;width:811px;height:1px;background:#a0a0a0"></div>
<div style="left:39px;top:813px;width:124px;height:1px;background:#111"></div>
<div style="left:163px;top:813px;width:388px;height:1px;background:#a0a0a0"></div>
<div style="left:551px;top:813px;width:532px;height:1px;background:#009000"></div>
<div style="left:1083px;top:813px;width:811px;height:1px;background:#a0a0a0"></div>
<div style="left:39px;top:837px;width:124px;height:1px;background:#111"></div>
<div style="left:163px;top:837px;width:388px;height:1px;background:#a0a0a0"></div>
<div style="left:551px;top:837px;width:532px;height:1px;background:#009000"></div>
<div style="left:1083px;top:837px;width:811px;height:1px;background:#a0a0a0"></div>
<div style="left:39px;top:861px;width:124px;height:1px;background:#111"></div>
<div style="left:163px;top:861px;width:388px;height:1px;background:#a0a0a0"></div>
<div style="left:551px;top:861px;width:532px;height:1px;background:#009000"></div>
<div style="left:1083px;top:861px;width:811px;height:1px;background:#a0a0a0"></div>
<div style="left:39px;top:885px;width:124px;height:1px;background:#111"></div>
<div style="left:163px;top:885px;width:388px;height:1px;background:#a0a0a0"></div>
<div style="left:551px;top:885px;width:532px;height:1px;background:#009000"></div>
<div style="left:1083px;top:885px;width:811px;height:1px;background:#a0a0a0"></div>
<div style="left:39px;top:911px;width:124px;height:1px;background:#111"></div>
<div style="left:163px;top:911px;width:388px;height:1px;background:#a0a0a0"></div>
<div style="left:551px;top:911px;width:532px;height:1px;background:#009000"></div>
<div style="left:1083px;top:911px;width:811px;height:1px;background:#a0a0a0"></div>
<div style="left:39px;top:937px;width:124px;height:1px;background:#111"></div>
<div style="left:163px;top:937px;width:388px;height:1px;background:#a0a0a0"></div>
<div style="left:551px;top:937px;width:532px;height:1px;background:#009000"></div>
<div style="left:1083px;top:937px;width:811px;height:1px;background:#a0a0a0"></div>
<div style="left:39px;top:963px;width:124px;height:1px;background:#111"></div>
<div style="left:163px;top:963px;width:388px;height:1px;background:#a0a0a0"></div>
<div style="left:551px;top:963px;width:532px;height:1px;background:#009000"></div>
<div style="left:1083px;top:963px;width:811px;height:1px;background:#a0a0a0"></div>
<div style="left:39px;top:989px;width:124px;height:1px;background:#111"></div>
<div style="left:163px;top:989px;width:388px;height:1px;background:#a0a0a0"></div>
<div style="left:551px;top:989px;width:532px;height:1px;background:#009000"></div>
<div style="left:1083px;top:989px;width:811px;height:1px;background:#a0a0a0"></div>
<div style="left:39px;top:1015px;width:124px;height:1px;background:#111"></div>
<div style="left:163px;top:1015px;width:388px;height:1px;background:#a0a0a0"></div>
<div style="left:551px;top:1015px;width:532px;height:1px;background:#009000"></div>
<div style="left:1083px;top:1015px;width:811px;height:1px;background:#a0a0a0"></div>
<div style="left:110px;top:465px;width:1px;height:561px;background:#111"></div>
<div style="left:551px;top:465px;width:1px;height:561px;background:#a0a0a0"></div>
<div style="left:684px;top:465px;width:1px;height:561px;background:#009000"></div>
<div style="left:817px;top:465px;width:1px;height:561px;background:#009000"></div>
<div style="left:950px;top:465px;width:1px;height:561px;background:#009000"></div>
<div style="left:1083px;top:465px;width:1px;height:561px;background:#009000"></div>
<div style="left:1223px;top:465px;width:1px;height:561px;background:#a0a0a0"></div>
<div style="left:1363px;top:465px;width:1px;height:561px;background:#a0a0a0"></div>
<div style="left:1502px;top:465px;width:1px;height:561px;background:#a0a0a0"></div>
<div style="left:1750px;top:465px;width:1px;height:561px;background:#a0a0a0"></div>
<div style="left:1859px;top:465px;width:1px;height:561px;background:#a0a0a0"></div>
<div style="left:1894px;top:311px;width:1px;height:715px;background:#a0a0a0"></div>
<div style="left:1640px;top:311px;width:2px;height:715px;background:repeating-linear-gradient(to bottom,#0000d8 0 9px,transparent 9px 12px)"></div>
<div style="left:551px;top:311px;width:1px;height:154px;background:#a8a8a8"></div>
<div style="left:0px;top:310px;width:1894px;height:1px;background:#c0c0c0"></div>
<div style="left:163px;top:311px;width:1731px;height:1px;background:#0000d8"></div>
<div style="left:165px;top:312px;width:1729px;height:1px;background:#f2f0f6"></div>
<div style="left:162px;top:311px;width:3px;height:715px;background:#0000d8"></div>
<div class="t" style="left:400px;top:311px;width:281px;height:25px;line-height:25px;color:#3c3cdc;font-size:15px;font-weight:bold;text-align:right;white-space:nowrap;letter-spacing:0.45px">Ангилал сонгож харах</div>
<div style="left:685px;top:312px;width:131px;height:23px;background:#f0f0f0;border:1px solid #8c8c8c;border-top:none;border-left:1px solid #b0b0b0"></div>
<div class="t" style="left:600px;top:350px;width:720px;height:24px;line-height:24px;color:#111;font-size:15px;font-weight:bold;text-align:center;letter-spacing:0.3px">ТАЙЛБАР ХХК-НИЙ 2020 ОНЫ 1-Р УЛИРЛЫН АЖЛЫН ХҮСНЭГТ.</div>
<div class="t" style="left:1380px;top:339px;width:260px;height:24px;line-height:24px;color:#4646dc;font-size:15px;text-align:right;white-space:nowrap">44 данс ашигласан</div>
<div style="left:170px;top:342px;width:117px;height:32px;background:#f0f0f0;box-shadow:inset -1px -1px 0 #6a6a6a, inset 1px 1px 0 #fff, inset -2px -2px 0 #a0a0a0;"></div>
<div class="t" style="left:170px;top:342px;width:117px;height:32px;line-height:32px;color:#1a8c1a;font-size:15px;text-align:center;letter-spacing:0.3px;white-space:nowrap">Тайлан харах</div>
<div style="left:170px;top:374px;width:117px;height:32px;background:#f0f0f0;box-shadow:inset -1px -1px 0 #6a6a6a, inset 1px 1px 0 #fff, inset -2px -2px 0 #a0a0a0;"></div>
<div class="t" style="left:170px;top:374px;width:117px;height:32px;line-height:32px;color:#1a8c1a;font-size:15px;text-align:center;letter-spacing:0.3px;white-space:nowrap">Тусламж</div>
<div style="left:287px;top:342px;width:128px;height:32px;background:#f0f0f0;box-shadow:inset -1px -1px 0 #6a6a6a, inset 1px 1px 0 #fff, inset -2px -2px 0 #a0a0a0;"></div>
<div class="t" style="left:287px;top:342px;width:128px;height:32px;line-height:32px;color:#1a8c1a;font-size:15px;text-align:center;letter-spacing:0.3px;white-space:nowrap">Тавих/Paste</div>
<div style="left:287px;top:374px;width:128px;height:33px;background:#f0f0f0;box-shadow:inset -1px -1px 0 #6a6a6a, inset 1px 1px 0 #fff, inset -2px -2px 0 #a0a0a0;"></div>
<div class="t" style="left:287px;top:374px;width:128px;height:33px;line-height:33px;color:#1a8c1a;font-size:15px;text-align:center;letter-spacing:0.3px;white-space:nowrap">Тохиргоо</div>
<div style="left:422px;top:343px;width:88px;height:30px;background:#f0f0f0;box-shadow:inset -1px -1px 0 #6a6a6a, inset 1px 1px 0 #fff, inset -2px -2px 0 #a0a0a0;"></div>
<div class="t" style="left:422px;top:343px;width:88px;height:30px;line-height:30px;color:#1a8c1a;font-size:15px;text-align:center;letter-spacing:0.3px;white-space:nowrap">Automatic</div>
<div style="left:422px;top:374px;width:88px;height:33px;background:#f0f0f0;box-shadow:inset -1px -1px 0 #6a6a6a, inset 1px 1px 0 #fff, inset -2px -2px 0 #a0a0a0;"></div>
<div class="t" style="left:422px;top:374px;width:88px;height:33px;line-height:33px;color:#1a8c1a;font-size:15px;text-align:center;letter-spacing:0.3px;white-space:nowrap">Refresh</div>
<div style="left:820px;top:381px;width:262px;height:27px;background:#f0f0f0;box-shadow:inset -1px -1px 0 #6a6a6a, inset 1px 1px 0 #fff, inset -2px -2px 0 #a0a0a0;"></div>
<div class="t" style="left:820px;top:381px;width:262px;height:27px;line-height:27px;color:#1a8c1a;font-size:15px;text-align:center;letter-spacing:0.3px;white-space:nowrap">Эхний үлдэгдэл оруулах тайлбар</div>
<div style="left:89px;top:444px;width:20px;height:19px;background:#f4f4f4;border:1px solid #c8c8c8;box-sizing:border-box"></div>
<svg style="left:94px;top:451px" width="10" height="6" viewBox="0 0 10 6"><path d="M1 0 H9 L5 5 Z" fill="#555"/></svg>
<div style="left:142px;top:444px;width:20px;height:19px;background:#f4f4f4;border:1px solid #c8c8c8;box-sizing:border-box"></div>
<svg style="left:144px;top:446px" width="16" height="15" viewBox="0 0 16 15"><path d="M4 2 H14 L10 7 V12 L8 13 V7 Z" fill="#444"/><path d="M2 10 H7 L4.5 13 Z" fill="#444"/></svg>
<div style="left:816px;top:836px;width:136px;height:26px;border:2px solid #217346;box-shadow:inset 0 0 0 1px #fff;box-sizing:border-box;z-index:3"></div>
<div style="left:947px;top:857px;width:6px;height:6px;background:#217346;border:1px solid #fff;z-index:3"></div>
<div style="left:320px;top:436px;width:94px;height:94px;border-radius:50%;background:rgba(255,255,20,0.78);box-shadow:0 0 2px 1px rgba(255,255,60,0.45);z-index:4"></div>
<svg style="left:358px;top:474px;z-index:5" width="17" height="17" viewBox="0 0 17 17">
<path d="M5.5 0.5 H10.5 V5.5 H15.5 V10.5 H10.5 V15.5 H5.5 V10.5 H0.5 V5.5 H5.5 Z" fill="#fff" stroke="#000" stroke-width="1.5"/></svg>
<div style="left:0px;top:1026px;width:1920px;height:29px;background:#e6e6e6"></div>
<div style="left:0px;top:1026px;width:1894px;height:1px;background:#c0c0c0"></div>
<svg style="left:28px;top:1034px" width="8" height="10" viewBox="0 0 8 10"><path d="M7 0 V10 L1 5 Z" fill="#bdbdbd"/></svg>
<svg style="left:57px;top:1034px" width="8" height="10" viewBox="0 0 8 10"><path d="M1 0 V10 L7 5 Z" fill="#bdbdbd"/></svg>
<div style="left:106px;top:1028px;width:59px;height:23px;background:#0000ff"></div>
<div class="t" style="left:106px;top:1026px;width:59px;height:23px;line-height:23px;color:#fff;font-size:17px;text-align:center">Main</div>
<div style="left:103px;top:1030px;width:1px;height:20px;background:#9a9a9a"></div>
<div style="left:167px;top:1030px;width:1px;height:20px;background:#9a9a9a"></div>
<div style="left:257px;top:1030px;width:1px;height:20px;background:#9a9a9a"></div>
<div style="left:325px;top:1030px;width:1px;height:20px;background:#9a9a9a"></div>
<div style="left:437px;top:1030px;width:1px;height:20px;background:#9a9a9a"></div>
<div style="left:505px;top:1030px;width:1px;height:20px;background:#9a9a9a"></div>
<div style="left:568px;top:1030px;width:1px;height:20px;background:#9a9a9a"></div>
<div style="left:623px;top:1030px;width:1px;height:20px;background:#9a9a9a"></div>
<div class="t" style="left:168px;top:1026px;width:89px;height:23px;line-height:23px;color:#333;font-size:17px;text-align:center">togtmol</div>
<div class="t" style="left:258px;top:1026px;width:67px;height:23px;line-height:23px;color:#333;font-size:17px;text-align:center">jurnal</div>
<div style="left:327px;top:1026px;width:110px;height:25px;background:linear-gradient(#ffffff,#f7f7c8);border-bottom:2px solid #217346"></div>
<div class="t" style="left:327px;top:1026px;width:110px;height:23px;line-height:23px;color:#217346;font-size:16px;font-weight:bold;text-align:center">aj_husnegt</div>
<div class="t" style="left:438px;top:1026px;width:67px;height:23px;line-height:23px;color:#333;font-size:17px;text-align:center">tsalin</div>
<div class="t" style="left:506px;top:1026px;width:62px;height:23px;line-height:23px;color:#333;font-size:17px;text-align:center">TT11</div>
<div class="t" style="left:569px;top:1026px;width:54px;height:23px;line-height:23px;color:#333;font-size:17px;text-align:center">OTT</div>
<svg style="left:656px;top:1030px" width="22" height="22" viewBox="0 0 22 22"><circle cx="11" cy="11" r="9.5" fill="none" stroke="#c4c4c4" stroke-width="1.3"/><path d="M11 6 V16 M6 11 H16" stroke="#c4c4c4" stroke-width="1.3"/></svg>
<div style="left:1377px;top:1034px;width:3px;height:3px;background:#b0b0b0"></div>
<div style="left:1377px;top:1039px;width:3px;height:3px;background:#b0b0b0"></div>
<div style="left:1377px;top:1044px;width:3px;height:3px;background:#b0b0b0"></div>
<div style="left:1395px;top:1032px;width:498px;height:18px;background:#d8d8d8"></div>
<div style="left:1395px;top:1031px;width:18px;height:18px;background:#fff;border:1px solid #b8b8b8"></div>
<svg style="left:1400px;top:1035px" width="8" height="10" viewBox="0 0 8 10"><path d="M6 0 V10 L0 5 Z" fill="#555"/></svg>
<div style="left:1414px;top:1032px;width:20px;height:17px;background:#fff;border:1px solid #c8c8c8"></div>
<div style="left:1874px;top:1031px;width:18px;height:18px;background:#fff;border:1px solid #b8b8b8"></div>
<svg style="left:1881px;top:1035px" width="8" height="10" viewBox="0 0 8 10"><path d="M1 0 V10 L7 5 Z" fill="#555"/></svg>
<div style="left:1895px;top:230px;width:25px;height:796px;background:#e6e6e6"></div>
<div style="left:1898px;top:238px;width:18px;height:774px;background:#d8d8d8"></div>
<div style="left:1898px;top:238px;width:17px;height:18px;background:#fff;border:1px solid #b8b8b8"></div>
<svg style="left:1902px;top:244px" width="10" height="6" viewBox="0 0 10 6"><path d="M0 6 H10 L5 0 Z" fill="#555"/></svg>
<div style="left:1898px;top:257px;width:17px;height:146px;background:#fff;border:1px solid #b8b8b8"></div>
<div style="left:1898px;top:1008px;width:17px;height:18px;background:#fff;border:1px solid #b8b8b8"></div>
<svg style="left:1902px;top:1014px" width="10" height="6" viewBox="0 0 10 6"><path d="M0 0 H10 L5 6 Z" fill="#555"/></svg>
<div style="left:0px;top:1055px;width:1920px;height:25px;background:#f0f0f0;border-top:1px solid #d4d4d4"></div>
<div class="t" style="left:7px;top:1058px;width:300px;height:23px;line-height:23px;color:#333;font-size:13.3px">51 of 185 records found</div>
<svg style="left:1450px;top:1059px" width="20" height="19" viewBox="0 0 20 19">
<rect x="0" y="0" width="18" height="12" rx="1" fill="#444"/><rect x="6" y="12" width="6" height="2" fill="#444"/>
<circle cx="14" cy="14" r="4" fill="#444" stroke="#f0f0f0" stroke-width="1"/><circle cx="14" cy="14" r="1.5" fill="#f0f0f0"/></svg>
<div class="t" style="left:1471px;top:1057px;width:120px;height:23px;line-height:23px;color:#333;font-size:13px">Display Settings</div>
<svg style="left:1597px;top:1061px" width="16" height="16" viewBox="0 0 16 16" fill="none" stroke="#666" stroke-width="1">
<rect x="0.5" y="0.5" width="15" height="15"/><path d="M5.5 0.5 V15.5 M10.5 0.5 V15.5 M0.5 5.5 H15.5 M0.5 10.5 H15.5"/></svg>
<svg style="left:1638px;top:1061px" width="17" height="16" viewBox="0 0 17 16" fill="none" stroke="#666" stroke-width="1">
<rect x="0.5" y="0.5" width="16" height="15"/><rect x="3.5" y="2.5" width="10" height="11"/><path d="M5 5.5 H12 M5 8 H12 M5 10.5 H12"/></svg>
<div style="left:1669px;top:1056px;width:41px;height:24px;background:#cfcfcf"></div>
<svg style="left:1681px;top:1061px" width="17" height="16" viewBox="0 0 17 16" fill="none" stroke="#666" stroke-width="1">
<rect x="0.5" y="0.5" width="16" height="15"/><path d="M5.5 0.5 V10.5 M10.5 0.5 V10.5 H0.5"/></svg>
<div style="left:1715px;top:1068px;width:10px;height:2px;background:#666"></div>
<div style="left:1729px;top:1068px;width:124px;height:1px;background:#b0b0b0"></div>
<div style="left:1791px;top:1062px;width:6px;height:13px;background:#777"></div>
<div style="left:1857px;top:1068px;width:11px;height:2px;background:#666"></div>
<div style="left:1861.5px;top:1063px;width:2px;height:11px;background:#666"></div>
<div class="t" style="left:1880px;top:1058px;width:40px;height:23px;line-height:23px;color:#333;font-size:13px">115%</div>
</body></html>
